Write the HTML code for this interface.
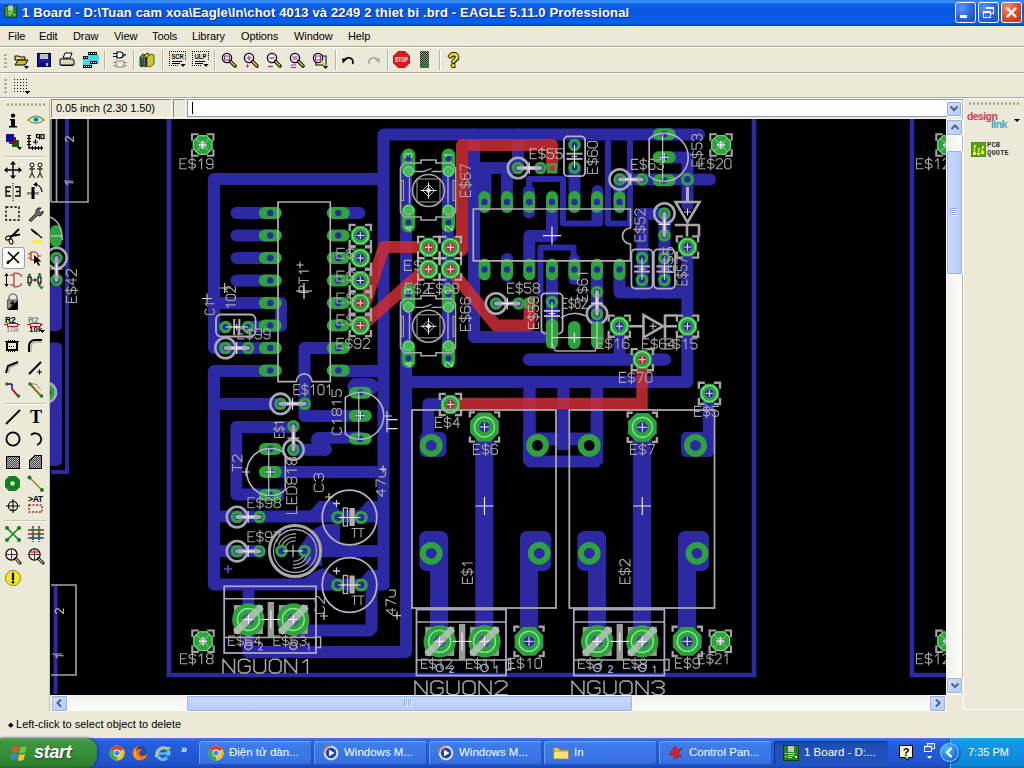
<!DOCTYPE html>
<html><head><meta charset="utf-8"><title>EAGLE</title><style>
html,body{margin:0;padding:0;overflow:hidden}
body{width:1024px;height:768px;overflow:hidden;position:relative;background:#ece9d8;font-family:"Liberation Sans",sans-serif;font-size:11px;color:#000}
div,span,svg{position:absolute}
#title{left:0;top:0;width:1024px;height:26px;background:linear-gradient(#2a78f0 0%,#3f95ff 7%,#0f62ea 16%,#0a57de 38%,#085ae6 70%,#0a60ee 86%,#0650d8 94%,#0340b4 100%)}
.appico{left:4px;top:5px}
.ttext{left:22px;top:5px;color:#fff;font-weight:bold;font-size:13px;white-space:nowrap;text-shadow:1px 1px 0 #0a2a80;letter-spacing:0.15px}
.wb{top:2px;width:19px;height:19px;border:1px solid #fff;border-radius:3px;background:radial-gradient(circle at 30% 25%,#5c94ff 0%,#2a62e0 55%,#1c48c0 100%)}
.wclose{background:radial-gradient(circle at 30% 25%,#f09070 0%,#d8482c 55%,#b83018 100%)}
#menu{left:0;top:26px;width:1024px;height:20px}
#menu span{top:4px;font-size:11px;white-space:nowrap;letter-spacing:-0.1px}
.hsep{left:0;width:1024px;height:1px;background:#aca899;border-bottom:1px solid #fff}
.vsep{width:1px;background:#b8b4a4;border-right:1px solid #fff}
.gripv{width:3px;background-image:radial-gradient(circle,#a09c8c 1px,transparent 1.3px);background-size:3px 4px}
.griph{height:3px;background-image:radial-gradient(circle,#a09c8c 1px,transparent 1.3px);background-size:4px 3px}
#canvas{left:50px;top:119px;width:896px;height:576px;background:#000;overflow:hidden}
#canvas svg{left:0;top:0}
.field{background:#ece9d8;border:1px solid;border-color:#8a887c #fff #fff #8a887c}
#task{left:0;top:738px;width:1024px;height:30px;background:linear-gradient(#3c80ea 0%,#2a68dc 8%,#245edc 20%,#2358d4 60%,#1f50c8 90%,#1a44b0 100%)}
#start{left:0;top:0;width:97px;height:30px;border-radius:0 12px 12px 0;background:linear-gradient(#58a858 0%,#3c963c 12%,#37903a 50%,#2e7e30 90%,#256c28 100%);box-shadow:1px 0 3px #1a3a90}
#start span{left:34px;top:4px;color:#fff;font-size:18px;font-weight:bold;font-style:italic;text-shadow:1px 1px 2px #1c4c1c;letter-spacing:-0.3px}
.tb{top:3px;height:24px;border-radius:3px;background:linear-gradient(#4c8cf4 0%,#3c7cea 15%,#3874e4 80%,#3068d8 100%);box-shadow:inset 1px 1px 0 #6aa0fa,inset -1px -1px 0 #2456c0;color:#fff;font-size:11.5px;white-space:nowrap;overflow:hidden}
.tb span{left:30px;top:5px}
.tb.act{background:linear-gradient(#1c48a8 0%,#2050b8 30%,#2254c0 100%);box-shadow:inset 1px 1px 1px #12308a}
#tray{left:949px;top:0;width:74px;height:30px;background:linear-gradient(#1cb0f4 0%,#1498e8 10%,#1290e0 50%,#0f84d4 90%,#0c70c0 100%);border-left:1px solid #0a58b0;box-shadow:inset 1px 0 0 #40c0ff}
#tray span{left:18px;top:8px;color:#fff;font-size:11px}
.sbtn{width:15px;height:15px;border:1px solid #fff;border-radius:2px;background:linear-gradient(135deg,#d4e0fc,#b4c8f8);box-shadow:0 0 0 1px #98b0e8 inset}
.sthumb{border:1px solid #fff;border-radius:2px;background:linear-gradient(90deg,#c8d8fc,#b8ccfa);box-shadow:0 0 0 1px #98b4f0 inset}
.strack{background:linear-gradient(90deg,#f0f0ec,#fdfdfb)}
</style></head><body>
<div id="title">
<svg class="appico" width="13" height="13" viewBox="0 0 16 16"><rect x="0" y="0" width="16" height="16" fill="#0c3c0c"/><rect x="1" y="1" width="14" height="14" fill="#1e8420"/><rect x="5" y="1" width="6" height="6" fill="#c4c4c4"/><rect x="6" y="0" width="1" height="1" fill="#c4c4c4"/><rect x="8" y="0" width="1" height="1" fill="#c4c4c4"/><rect x="10" y="0" width="1" height="1" fill="#c4c4c4"/><rect x="2" y="3" width="1" height="1" fill="#c8f070"/><rect x="2" y="5" width="1" height="1" fill="#c8f070"/><rect x="2" y="8" width="2" height="1" fill="#c8f070"/><rect x="5" y="8" width="7" height="1" fill="#c8f070"/><rect x="5" y="10" width="6" height="1" fill="#c8f070"/><rect x="2" y="11" width="2" height="1" fill="#c8f070"/><rect x="5" y="12" width="4" height="1" fill="#c8f070"/><rect x="12" y="11" width="2" height="2" fill="#e8e840"/></svg>
<span class="ttext">1 Board - D:\Tuan cam xoa\Eagle\In\chot 4013 và 2249 2 thiet bi .brd - EAGLE 5.11.0 Professional</span>
<div class="wb" style="left:955px"><div style="left:4px;top:12px;width:7px;height:3px;background:#fff"></div></div>
<div class="wb" style="left:978px"><svg width="19" height="19" viewBox="0 0 19 19" shape-rendering="crispEdges" style="left:0;top:0"><path d="M7.5 4.5h7v6h-2.5" fill="none" stroke="#fff"/><rect x="7" y="4" width="8" height="2" fill="#fff"/><rect x="4.5" y="8.5" width="7" height="6" fill="none" stroke="#fff"/><rect x="4" y="8" width="8" height="2" fill="#fff"/></svg></div>
<div class="wb wclose" style="left:1001px"><svg width="19" height="19" viewBox="0 0 19 19" style="left:0;top:0"><path d="M5.5 5.5L13.5 13.5M13.5 5.5L5.5 13.5" stroke="#fff" stroke-width="2.2" stroke-linecap="round"/></svg></div>
</div>
<div id="menu">
<span style="left:8px">File</span>
<span style="left:39px">Edit</span>
<span style="left:73px">Draw</span>
<span style="left:114px">View</span>
<span style="left:152px">Tools</span>
<span style="left:192px">Library</span>
<span style="left:241px">Options</span>
<span style="left:294px">Window</span>
<span style="left:348px">Help</span>
</div>
<div class="hsep" style="top:46px"></div>
<div class="hsep" style="top:72px"></div>
<div class="hsep" style="top:97px"></div>
<div class="gripv" style="left:4px;top:53px;height:16px"></div>
<div class="gripv" style="left:4px;top:78px;height:16px"></div>
<svg style="left:14px;top:52px" width="18" height="18" viewBox="0 0 18 18"><path d="M1 4h4l1 1h5v3H1z" fill="#e8e060" stroke="#000" stroke-width="1"/><path d="M1 13L4 8h10l-3 5z" fill="#c8c020" stroke="#000" stroke-width="1"/><path d="M10 14h5l-2.5 3z" fill="#000"/></svg><svg style="left:37px;top:53px" width="15" height="15" viewBox="0 0 15 15" shape-rendering="crispEdges"><rect x="0.5" y="0.5" width="13" height="13" fill="#1818a0" stroke="#000"/><rect x="3" y="1" width="8" height="5" fill="#c0c0c0"/><rect x="3" y="9" width="8" height="5" fill="#101070"/><rect x="9" y="10" width="2" height="3" fill="#c0c0c0"/></svg><svg style="left:59px;top:52px" width="17" height="16" viewBox="0 0 17 16"><path d="M4 6L6 1h7l-2 5z" fill="#fff" stroke="#000"/><path d="M1 7h13l1 2v4H1z" fill="#d8d8d8" stroke="#000"/><path d="M2 11h12" stroke="#e8e040" stroke-width="1.5"/><path d="M2 13.5h12" stroke="#000"/></svg><svg style="left:83px;top:52px" width="16" height="16" viewBox="0 0 16 16" shape-rendering="crispEdges"><rect x="5" y="0" width="9" height="3" fill="#000"/><rect x="0" y="4" width="5" height="3" fill="#000"/><rect x="5" y="3" width="11" height="9" fill="#40d8e8"/><rect x="0" y="7" width="9" height="6" fill="#40d8e8"/><rect x="7" y="9" width="7" height="3" fill="#000"/><rect x="0" y="13" width="9" height="3" fill="#000"/><rect x="6" y="1" width="1" height="1" fill="#fff"/><rect x="8" y="1" width="1" height="1" fill="#fff"/><rect x="10" y="1" width="1" height="1" fill="#fff"/><rect x="12" y="1" width="1" height="1" fill="#fff"/><rect x="1" y="14" width="1" height="1" fill="#fff"/><rect x="3" y="14" width="1" height="1" fill="#fff"/><rect x="5" y="14" width="1" height="1" fill="#fff"/><rect x="7" y="14" width="1" height="1" fill="#fff"/><rect x="1" y="5" width="1" height="1" fill="#fff"/><rect x="3" y="5" width="1" height="1" fill="#fff"/><rect x="8" y="10" width="1" height="1" fill="#fff"/><rect x="10" y="10" width="1" height="1" fill="#fff"/><rect x="12" y="10" width="1" height="1" fill="#fff"/></svg><svg style="left:112px;top:51px" width="16" height="18" viewBox="0 0 16 18"><path d="M1 2.5h4M1 5.5h4M5 1v6h3a3 3 0 0 0 0-6zM11 4h3" stroke="#000" stroke-width="1.1" fill="#fff"/><circle cx="12" cy="4" r="1" fill="#fff" stroke="#000" stroke-width="0.8"/><path d="M4 10h8v6H4zM1 11.5h3M1 14.5h3M12 11.5h3M12 14.5h3" stroke="#909088" stroke-width="1.1" fill="#e8e4d4"/></svg><svg style="left:139px;top:52px" width="16" height="16" viewBox="0 0 16 16"><path d="M1 5l3-3 2 1v10l-3 2-2-1z" fill="#60a030" stroke="#000" stroke-width="0.8"/><path d="M5 4l3-3 2 1v10l-3 3-2-1z" fill="#c8c030" stroke="#000" stroke-width="0.8"/><path d="M8 5l4-3 3 1v9l-4 3-3-1z" fill="#d0c828" stroke="#404000" stroke-width="0.8"/><path d="M7 5v9" stroke="#2020a0" stroke-width="2"/><path d="M3 6v8" stroke="#203060" stroke-width="1.5"/></svg><svg style="left:169px;top:51px" width="18" height="17" viewBox="0 0 18 17"><rect x="0" y="0" width="1" height="1" fill="#000"/><rect x="0" y="2" width="1" height="1" fill="#000"/><rect x="0" y="4" width="1" height="1" fill="#000"/><rect x="0" y="6" width="1" height="1" fill="#000"/><rect x="0" y="8" width="1" height="1" fill="#000"/><rect x="0" y="10" width="1" height="1" fill="#000"/><rect x="0" y="12" width="1" height="1" fill="#000"/><rect x="0" y="14" width="1" height="1" fill="#000"/><rect x="16" y="0" width="1" height="1" fill="#000"/><rect x="16" y="2" width="1" height="1" fill="#000"/><rect x="16" y="4" width="1" height="1" fill="#000"/><rect x="16" y="6" width="1" height="1" fill="#000"/><rect x="16" y="8" width="1" height="1" fill="#000"/><rect x="0" y="0" width="1" height="1" fill="#000"/><rect x="2" y="0" width="1" height="1" fill="#000"/><rect x="4" y="0" width="1" height="1" fill="#000"/><rect x="6" y="0" width="1" height="1" fill="#000"/><rect x="8" y="0" width="1" height="1" fill="#000"/><rect x="10" y="0" width="1" height="1" fill="#000"/><rect x="12" y="0" width="1" height="1" fill="#000"/><rect x="14" y="0" width="1" height="1" fill="#000"/><rect x="16" y="0" width="1" height="1" fill="#000"/><rect x="0" y="14" width="1" height="1" fill="#000"/><rect x="2" y="14" width="1" height="1" fill="#000"/><rect x="4" y="14" width="1" height="1" fill="#000"/><rect x="6" y="14" width="1" height="1" fill="#000"/><rect x="8" y="14" width="1" height="1" fill="#000"/><text x="8.5" y="8" font-size="7.5" font-weight="bold" text-anchor="middle" textLength="12" lengthAdjust="spacingAndGlyphs" font-family="Liberation Sans">SCR</text><rect x="3" y="10" width="10" height="1" fill="#000"/><rect x="3" y="12" width="8" height="1" fill="#000"/><path d="M11.5 13h5l-2.5 3z" fill="#000"/></svg><svg style="left:192px;top:51px" width="18" height="17" viewBox="0 0 18 17"><rect x="0" y="0" width="1" height="1" fill="#000"/><rect x="0" y="2" width="1" height="1" fill="#000"/><rect x="0" y="4" width="1" height="1" fill="#000"/><rect x="0" y="6" width="1" height="1" fill="#000"/><rect x="0" y="8" width="1" height="1" fill="#000"/><rect x="0" y="10" width="1" height="1" fill="#000"/><rect x="0" y="12" width="1" height="1" fill="#000"/><rect x="0" y="14" width="1" height="1" fill="#000"/><rect x="16" y="0" width="1" height="1" fill="#000"/><rect x="16" y="2" width="1" height="1" fill="#000"/><rect x="16" y="4" width="1" height="1" fill="#000"/><rect x="16" y="6" width="1" height="1" fill="#000"/><rect x="16" y="8" width="1" height="1" fill="#000"/><rect x="0" y="0" width="1" height="1" fill="#000"/><rect x="2" y="0" width="1" height="1" fill="#000"/><rect x="4" y="0" width="1" height="1" fill="#000"/><rect x="6" y="0" width="1" height="1" fill="#000"/><rect x="8" y="0" width="1" height="1" fill="#000"/><rect x="10" y="0" width="1" height="1" fill="#000"/><rect x="12" y="0" width="1" height="1" fill="#000"/><rect x="14" y="0" width="1" height="1" fill="#000"/><rect x="16" y="0" width="1" height="1" fill="#000"/><rect x="0" y="14" width="1" height="1" fill="#000"/><rect x="2" y="14" width="1" height="1" fill="#000"/><rect x="4" y="14" width="1" height="1" fill="#000"/><rect x="6" y="14" width="1" height="1" fill="#000"/><rect x="8" y="14" width="1" height="1" fill="#000"/><text x="8.5" y="8" font-size="7.5" font-weight="bold" text-anchor="middle" textLength="12" lengthAdjust="spacingAndGlyphs" font-family="Liberation Sans">ULP</text><rect x="3" y="10" width="10" height="1" fill="#000"/><rect x="3" y="12" width="8" height="1" fill="#000"/><path d="M11.5 13h5l-2.5 3z" fill="#000"/></svg><svg style="left:221px;top:52px" width="16" height="16" viewBox="0 0 16 16"><circle cx="6" cy="6" r="4.6" fill="#f8f0f8" stroke="#000" stroke-width="1.3"/><path d="M9.5 9.5 L14 14" stroke="#000" stroke-width="3.4" stroke-linecap="round"/><path d="M9.8 9.8 L13.8 13.8" stroke="#d8d840" stroke-width="1.6" stroke-linecap="round"/><rect x="3.5" y="4" width="5" height="4" fill="none" stroke="#a020a0" stroke-width="1"/></svg><svg style="left:243px;top:52px" width="16" height="17" viewBox="0 0 16 17"><circle cx="6" cy="6" r="4.6" fill="#f8f0f8" stroke="#000" stroke-width="1.3"/><path d="M9.5 9.5 L14 14" stroke="#000" stroke-width="3.4" stroke-linecap="round"/><path d="M9.8 9.8 L13.8 13.8" stroke="#d8d840" stroke-width="1.6" stroke-linecap="round"/><path d="M3.5 6h5M6 3.5v5" stroke="#a020a0" stroke-width="1.2"/><path d="M3 14h3M4.5 12.5v3" stroke="#c02060" stroke-width="1"/></svg><svg style="left:266px;top:52px" width="16" height="17" viewBox="0 0 16 17"><circle cx="6" cy="6" r="4.6" fill="#f8f0f8" stroke="#000" stroke-width="1.3"/><path d="M9.5 9.5 L14 14" stroke="#000" stroke-width="3.4" stroke-linecap="round"/><path d="M9.8 9.8 L13.8 13.8" stroke="#d8d840" stroke-width="1.6" stroke-linecap="round"/><path d="M3.5 6h5" stroke="#a020a0" stroke-width="1.2"/><path d="M2 14.5h5" stroke="#a020a0" stroke-width="1.3"/></svg><svg style="left:289px;top:52px" width="16" height="17" viewBox="0 0 16 17"><circle cx="6" cy="6" r="4.6" fill="#f8f0f8" stroke="#000" stroke-width="1.3"/><path d="M9.5 9.5 L14 14" stroke="#000" stroke-width="3.4" stroke-linecap="round"/><path d="M9.8 9.8 L13.8 13.8" stroke="#d8d840" stroke-width="1.6" stroke-linecap="round"/><path d="M3.5 5h5M3.5 7h5" stroke="#a020a0" stroke-width="1.1"/><path d="M2 13h5M2 15.5h5" stroke="#a020a0" stroke-width="1.2"/></svg><svg style="left:312px;top:52px" width="17" height="18" viewBox="0 0 17 18"><rect x="4" y="4" width="10" height="9" fill="#e8e8e8" stroke="#000"/><circle cx="6" cy="6" r="4.6" fill="#f8f0f8" stroke="#000" stroke-width="1.3"/><rect x="3.5" y="4" width="5" height="4" fill="none" stroke="#a020a0"/><path d="M9.8 9.8 L13 13" stroke="#d8d840" stroke-width="2" stroke-linecap="round"/><path d="M11 14h5l-2.5 3z" fill="#000"/></svg><svg style="left:342px;top:54px" width="16" height="12" viewBox="0 0 16 12"><path d="M3 6 A4.2 4.2 0 1 1 10.5 10" fill="none" stroke="#000" stroke-width="1.7"/><path d="M0 4.5L5.5 4.5 L0.8 9.5z" fill="#000"/></svg><svg style="left:366px;top:54px" width="16" height="12" viewBox="0 0 16 12"><path d="M11 6 A4.2 4.2 0 1 0 3.5 10" fill="none" stroke="#aaa69a" stroke-width="1.7"/><path d="M14 4.5L8.5 4.5 L13.2 9.5z" fill="#aaa69a"/></svg><svg style="left:393px;top:51px" width="17" height="17" viewBox="0 0 17 17"><polygon points="5,0.5 12,0.5 16.5,5 16.5,12 12,16.5 5,16.5 0.5,12 0.5,5" fill="#e01818" stroke="#a00000" stroke-width="0.8"/><text x="8.5" y="11.3" font-size="6.6" font-weight="bold" fill="#fff" text-anchor="middle" font-family="Liberation Sans" textLength="13" lengthAdjust="spacingAndGlyphs">STOP</text></svg><div style="left:420px;top:51px;width:9px;height:17px;background-image:conic-gradient(#202820 25%,#88a088 0 50%,#202820 0 75%,#88a088 0);background-size:2px 2px"></div><svg style="left:420px;top:63px" width="9" height="5" viewBox="0 0 9 5"><path d="M1 1l3 3 4-4" stroke="#208020" stroke-width="1.6" fill="none"/></svg><span style="left:447px;top:48px;font-size:21px;font-weight:bold;color:#f0e800;text-shadow:1px 0 0 #000,-1px 0 0 #000,0 1px 0 #000,0 -1px 0 #000,1px 1px 0 #000;transform:scaleX(0.9)">?</span><div class="vsep" style="left:104px;top:50px;height:20px"></div><div class="vsep" style="left:133px;top:50px;height:20px"></div><div class="vsep" style="left:162px;top:50px;height:20px"></div><div class="vsep" style="left:214px;top:50px;height:20px"></div><div class="vsep" style="left:335px;top:50px;height:20px"></div><div class="vsep" style="left:387px;top:50px;height:20px"></div><div class="vsep" style="left:439px;top:50px;height:20px"></div>
<svg style="left:14px;top:79px" width="17" height="16" viewBox="0 0 17 16" shape-rendering="crispEdges"><rect x="0" y="0" width="1" height="1" fill="#000"/><rect x="0" y="3" width="1" height="1" fill="#000"/><rect x="0" y="6" width="1" height="1" fill="#000"/><rect x="0" y="9" width="1" height="1" fill="#000"/><rect x="0" y="12" width="1" height="1" fill="#000"/><rect x="3" y="0" width="1" height="1" fill="#000"/><rect x="3" y="3" width="1" height="1" fill="#000"/><rect x="3" y="6" width="1" height="1" fill="#000"/><rect x="3" y="9" width="1" height="1" fill="#000"/><rect x="3" y="12" width="1" height="1" fill="#000"/><rect x="6" y="0" width="1" height="1" fill="#000"/><rect x="6" y="3" width="1" height="1" fill="#000"/><rect x="6" y="6" width="1" height="1" fill="#000"/><rect x="6" y="9" width="1" height="1" fill="#000"/><rect x="6" y="12" width="1" height="1" fill="#000"/><rect x="9" y="0" width="1" height="1" fill="#000"/><rect x="9" y="3" width="1" height="1" fill="#000"/><rect x="9" y="6" width="1" height="1" fill="#000"/><rect x="9" y="9" width="1" height="1" fill="#000"/><rect x="9" y="12" width="1" height="1" fill="#000"/><rect x="12" y="0" width="1" height="1" fill="#000"/><rect x="12" y="3" width="1" height="1" fill="#000"/><rect x="12" y="6" width="1" height="1" fill="#000"/><rect x="12" y="9" width="1" height="1" fill="#000"/><rect x="12" y="12" width="1" height="1" fill="#000"/><path d="M11 12h5l-2.5 3z" fill="#000"/></svg>
<div class="griph" style="left:6px;top:103px;width:40px"></div>
<div class="field" style="left:51px;top:99px;width:119px;height:17px"></div>
<span style="left:56px;top:102px;font-size:11px;white-space:nowrap;letter-spacing:-0.1px">0.05 inch (2.30 1.50)</span>
<div class="field" style="left:173px;top:99px;width:11px;height:17px"></div>
<div style="left:187px;top:99px;width:775px;height:18px;background:#fff;border-top:1px solid #7f9db9;border-left:1px solid #7f9db9;border-bottom:1px solid #7f9db9;box-sizing:border-box"></div>
<div style="left:192px;top:102px;width:1px;height:12px;background:#000"></div>
<div class="sbtn" style="left:946px;top:101px;width:14px;height:14px"></div>
<svg style="left:949px;top:105px" width="10" height="8" viewBox="0 0 10 8"><path d="M1.5 1.5L5 5 8.5 1.5" stroke="#4d6185" stroke-width="2" fill="none"/></svg>
<div style="left:49px;top:99px;width:1px;height:612px;background:#c8c4b4"></div>
<svg style="left:4px;top:112px" width="18" height="18" viewBox="0 0 18 18"><circle cx="9" cy="3.6" r="2.2" fill="#000"/><path d="M6 7h5v7h2v1.6H5V14h2V8.6H6z" fill="#000"/></svg><svg style="left:27px;top:112px" width="18" height="18" viewBox="0 0 18 18"><path d="M1 8 Q9 0.5 17 8 Q9 14.5 1 8z" fill="#fff" stroke="#a09020" stroke-width="1.3"/><circle cx="9" cy="7.6" r="3.4" fill="#40d8e8"/><circle cx="9" cy="7.6" r="1.4" fill="#103060"/></svg><svg style="left:4px;top:134px" width="18" height="18" viewBox="0 0 18 18"><rect x="8" y="6" width="7" height="7" fill="#106010"/><rect x="5" y="3" width="7" height="7" fill="#901010"/><rect x="2" y="0" width="8" height="8" fill="#1010a0"/><path d="M13 13h5l-2.5 3z" fill="#000"/></svg><svg style="left:27px;top:134px" width="18" height="18" viewBox="0 0 18 18"><path d="M2 1v13h14" stroke="#000" stroke-width="1.4" fill="none"/><rect x="0" y="1" width="4" height="1" fill="#000"/><rect x="0" y="4" width="4" height="1" fill="#000"/><rect x="0" y="7" width="4" height="1" fill="#000"/><rect x="0" y="10" width="4" height="1" fill="#000"/><rect x="5" y="12" width="1" height="4" fill="#000"/><rect x="8" y="12" width="1" height="4" fill="#000"/><rect x="11" y="12" width="1" height="4" fill="#000"/><rect x="14" y="12" width="1" height="4" fill="#000"/><path d="M6 8h5M8.5 5.5v5" stroke="#000" stroke-width="1.2"/><rect x="9.5" y="0.5" width="3" height="3" fill="none" stroke="#000" stroke-width="1.2"/><path d="M12.5 3.5v2" stroke="#000" stroke-width="1.2"/><rect x="14" y="0.5" width="3" height="4" fill="none" stroke="#000" stroke-width="1.2"/></svg><svg style="left:4px;top:161px" width="18" height="18" viewBox="0 0 18 18"><path d="M9 1v16M1 9h16" stroke="#000" stroke-width="1.4"/><path d="M9 0l-3 3.5h6zM9 18l-3-3.5h6zM0 9l3.5-3v6zM18 9l-3.5-3v6z" fill="#000"/></svg><svg style="left:27px;top:161px" width="18" height="18" viewBox="0 0 18 18"><circle cx="5" cy="4" r="2" fill="#fff" stroke="#000" stroke-width="1"/><path d="M5 6v6M2 8h6M5 12l-2.5 5M5 12l2.5 5" stroke="#000" stroke-width="1" fill="none"/><circle cx="13" cy="4" r="2" fill="#fff" stroke="#000" stroke-width="1"/><path d="M13 6v6M10 8h6M13 12l-2.5 5M13 12l2.5 5" stroke="#000" stroke-width="1" fill="none"/></svg><svg style="left:4px;top:183px" width="18" height="18" viewBox="0 0 18 18"><path d="M9 0v18" stroke="#000" stroke-width="1" stroke-dasharray="1.2 1.2"/><path d="M7 4H2v9h5M2 8.5h4M11 4h5v9h-5M12 8.5h4" stroke="#000" stroke-width="1.3" fill="none"/></svg><svg style="left:27px;top:182px" width="18" height="18" viewBox="0 0 18 18"><rect x="0" y="10" width="12" height="2.6" fill="#888880"/><rect x="4.5" y="5" width="3" height="12" fill="#000"/><path d="M8 2 Q14 3 15 10" stroke="#000" stroke-width="1.2" fill="none"/><path d="M6 2.5l4-2.5v5z" fill="#000"/></svg><svg style="left:4px;top:205px" width="18" height="18" viewBox="0 0 18 18"><rect x="2" y="2" width="13" height="13" fill="none" stroke="#000" stroke-width="1.4" stroke-dasharray="2.4 1.8"/></svg><svg style="left:27px;top:205px" width="18" height="18" viewBox="0 0 18 18"><path d="M2 15 L9 8 A4 4 0 0 1 14 3 L11.5 6 L13 8 L16 6 A4 4 0 0 1 10.5 10.5 L4 16.5z" fill="#707070" stroke="#000" stroke-width="0.8"/></svg><svg style="left:4px;top:227px" width="18" height="18" viewBox="0 0 18 18"><path d="M6 11L15 2M6.5 9L16 7.5" stroke="#000" stroke-width="1.8"/><ellipse cx="4" cy="11" rx="2.6" ry="1.8" fill="#fff" stroke="#000" stroke-width="1.1" transform="rotate(-30 4 11)"/><ellipse cx="7" cy="14.5" rx="1.8" ry="2.6" fill="#fff" stroke="#000" stroke-width="1.1" transform="rotate(-20 7 14.5)"/></svg><svg style="left:27px;top:227px" width="18" height="18" viewBox="0 0 18 18"><path d="M4 2L15 11" stroke="#000" stroke-width="1.2"/><path d="M5 3L10 7" stroke="#000" stroke-width="2"/><ellipse cx="10" cy="14.5" rx="5.5" ry="1.6" fill="#f0f020"/></svg><div style="left:2px;top:247px;width:21px;height:20px;border:1px solid #98a0b0;border-radius:3px;background:#fcfcfc"></div><svg style="left:4px;top:250px" width="18" height="18" viewBox="0 0 18 18"><path d="M4 2L15 13M15 2L5 12" stroke="#000" stroke-width="1.7"/><path d="M4.5 11.5L3.8 13" stroke="#000" stroke-width="2.4" stroke-linecap="round"/></svg><svg style="left:27px;top:250px" width="18" height="18" viewBox="0 0 18 18"><path d="M1 4h3M1 8h3M4 2h3a4 4 0 0 1 0 8H4zM11 6h3" stroke="#b02020" stroke-width="1.1" fill="none"/><path d="M7 5v9l2.5-2 2 4 1.5-1-2-3.5h3.5z" fill="#000"/></svg><svg style="left:4px;top:272px" width="18" height="18" viewBox="0 0 18 18"><path d="M2.5 3v10" stroke="#000" stroke-width="1"/><path d="M2.5 1l-2.2 3h4.4zM2.5 15l-2.2-3h4.4z" fill="#000"/><path d="M6 3h4M6 13h4M10 1v14M10 1h2a7 7 0 0 1 0 14h-2" stroke="#b02020" stroke-width="1.1" fill="none"/></svg><svg style="left:27px;top:272px" width="18" height="18" viewBox="0 0 18 18"><rect x="1" y="5" width="3" height="6" fill="none" stroke="#000" stroke-width="1.2"/><circle cx="2.5" cy="3" r="1.4" fill="#108020"/><circle cx="2.5" cy="13" r="1.4" fill="#108020"/><path d="M5 8h4M7.5 6.5L9.5 8 7.5 9.5" stroke="#000" stroke-width="1" fill="none"/><rect x="11" y="5" width="3" height="6" fill="none" stroke="#000" stroke-width="1.2"/><circle cx="12.5" cy="2.5" r="1.6" fill="#108020"/><circle cx="12.5" cy="13" r="1.6" fill="#108020"/><path d="M12 14.5h5l-2.5 3z" fill="#108020"/></svg><svg style="left:4px;top:293px" width="18" height="18" viewBox="0 0 18 18"><path d="M5 8V5a4 4 0 0 1 8 0v3" stroke="#808080" stroke-width="1.6" fill="none"/><rect x="3.5" y="7" width="10" height="9" fill="#909090" stroke="#404040" stroke-width="0.8"/><path d="M13.5 8v8.5H4" stroke="#000" stroke-width="1"/><path d="M8.5 9v5M6.5 11l2-2.2 2 2.2" stroke="#000" stroke-width="1.3" fill="none"/></svg><span style="left:5px;top:315px;font-size:8.5px;font-weight:bold;color:#000;letter-spacing:-0.2px">R2</span><svg style="left:4px;top:322px" width="16" height="6" viewBox="0 0 16 6" shape-rendering="crispEdges"><path d="M0 2.5h3M13 2.5h3" stroke="#b02020" stroke-width="1"/><rect x="3" y="1" width="10" height="3" fill="none" stroke="#b02020" stroke-width="1"/></svg><span style="left:6px;top:325px;font-size:8px;color:#808080;font-weight:normal">10k</span><span style="left:28px;top:315px;font-size:8.5px;font-weight:bold;color:#808080;letter-spacing:-0.2px">R2</span><svg style="left:27px;top:322px" width="16" height="6" viewBox="0 0 16 6" shape-rendering="crispEdges"><path d="M0 2.5h3M13 2.5h3" stroke="#b02020" stroke-width="1"/><rect x="3" y="1" width="10" height="3" fill="none" stroke="#b02020" stroke-width="1"/></svg><span style="left:29px;top:325px;font-size:8px;color:#000;font-weight:bold">10k</span><svg style="left:40px;top:330px" width="5" height="4" viewBox="0 0 5 4"><path d="M0 0h5l-2.5 3z" fill="#000"/></svg><svg style="left:4px;top:338px" width="18" height="16" viewBox="0 0 18 16" shape-rendering="crispEdges"><rect x="3" y="4" width="10" height="8" fill="none" stroke="#000" stroke-width="1.2"/><rect x="4" y="2" width="1" height="2" fill="#000"/><rect x="6" y="2" width="1" height="2" fill="#000"/><rect x="8" y="2" width="1" height="2" fill="#000"/><rect x="10" y="2" width="1" height="2" fill="#000"/><rect x="4" y="12" width="1" height="2" fill="#000"/><rect x="6" y="12" width="1" height="2" fill="#000"/><rect x="8" y="12" width="1" height="2" fill="#000"/><rect x="10" y="12" width="1" height="2" fill="#000"/><rect x="1" y="3" width="14" height="1" fill="#000"/><path d="M5 8h6" stroke="#000" stroke-dasharray="1 1"/></svg><svg style="left:27px;top:338px" width="18" height="18" viewBox="0 0 18 18"><path d="M2 14V8a6 6 0 0 1 6-6h7" stroke="#000" stroke-width="2" fill="none"/><path d="M4 14V9a5 5 0 0 1 5-5h6" stroke="#909090" stroke-width="1" fill="none"/></svg><svg style="left:4px;top:360px" width="18" height="18" viewBox="0 0 18 18"><path d="M2 13L4 6L14 2" stroke="#000" stroke-width="2" fill="none"/><path d="M4 13L6 7.5L14 4" stroke="#909090" stroke-width="1" fill="none"/></svg><svg style="left:27px;top:360px" width="18" height="18" viewBox="0 0 18 18"><path d="M2 14L14 2" stroke="#000" stroke-width="2"/><path d="M10 12h5M12.5 9.5v5" stroke="#000" stroke-width="1"/></svg><svg style="left:4px;top:381px" width="18" height="18" viewBox="0 0 18 18"><path d="M3 3h5" stroke="#b02020" stroke-width="2"/><path d="M8 3v5l6 7" stroke="#1818c0" stroke-width="1.6" fill="none"/><path d="M8 8l6 7" stroke="#b02020" stroke-width="1.6"/><circle cx="3" cy="3" r="1.8" fill="#108020"/><circle cx="14.5" cy="15" r="1.8" fill="#108020"/></svg><svg style="left:27px;top:381px" width="18" height="18" viewBox="0 0 18 18"><path d="M3 3l11 12" stroke="#a08020" stroke-width="2"/><path d="M3 3l11 12" stroke="#000" stroke-width="0.8" stroke-dasharray="1.5 1.5"/><path d="M5 3l4 0 5 6" stroke="#000" stroke-width="0.8" fill="none" stroke-dasharray="1 1"/><circle cx="3" cy="3" r="1.8" fill="#108020"/><circle cx="14.5" cy="15" r="1.8" fill="#108020"/></svg><svg style="left:4px;top:408px" width="18" height="18" viewBox="0 0 18 18"><path d="M2 16L16 2" stroke="#000" stroke-width="1.8"/></svg><span style="left:30px;top:407px;font-size:18px;font-family:'Liberation Serif',serif;font-weight:bold;line-height:20px">T</span><svg style="left:4px;top:430px" width="18" height="18" viewBox="0 0 18 18"><circle cx="9" cy="9" r="6.6" fill="none" stroke="#000" stroke-width="1.8"/></svg><svg style="left:27px;top:430px" width="18" height="18" viewBox="0 0 18 18"><path d="M4 5a6 6 0 1 1 6 10" fill="none" stroke="#000" stroke-width="1.8"/></svg><div style="left:6px;top:456px;width:12px;height:11px;border:1px solid #000;background-image:conic-gradient(#404040 25%,#c0c0c0 0 50%,#404040 0 75%,#c0c0c0 0);background-size:2px 2px"></div><svg style="left:29px;top:455px" width="14" height="14" viewBox="0 0 14 14" shape-rendering="crispEdges"><defs><pattern id="chk" width="2" height="2" patternUnits="userSpaceOnUse"><rect width="2" height="2" fill="#c0c0c0"/><rect width="1" height="1" fill="#404040"/><rect x="1" y="1" width="1" height="1" fill="#404040"/></pattern></defs><path d="M0.5 13.5V6L6 0.5H12.5V13.5z" fill="url(#chk)" stroke="#000"/></svg><svg style="left:4px;top:475px" width="18" height="18" viewBox="0 0 18 18"><polygon points="5,1 12,1 16,5 16,12 12,16 5,16 1,12 1,5" fill="#108020"/><circle cx="8.5" cy="8.5" r="2.2" fill="#d0f0d0"/></svg><svg style="left:27px;top:475px" width="18" height="18" viewBox="0 0 18 18"><path d="M2 2L15 15" stroke="#a08020" stroke-width="1.5"/><circle cx="2.5" cy="2.5" r="2" fill="#108020"/><circle cx="15" cy="15" r="2" fill="#108020"/></svg><svg style="left:4px;top:497px" width="18" height="18" viewBox="0 0 18 18"><circle cx="9" cy="9" r="4.6" fill="none" stroke="#000" stroke-width="1.1"/><path d="M9 2v14M2 9h14" stroke="#000" stroke-width="1"/></svg><span style="left:28px;top:494px;font-size:8.5px;font-weight:bold;letter-spacing:-0.3px">&gt;AT</span><svg style="left:28px;top:504px" width="16" height="10" viewBox="0 0 16 10"><rect x="1" y="1" width="13" height="7" fill="none" stroke="#b02020" stroke-width="1.4" stroke-dasharray="2 1.5"/></svg><svg style="left:4px;top:525px" width="18" height="18" viewBox="0 0 18 18"><path d="M3 3l12 12M15 3L3 15" stroke="#108020" stroke-width="1.5"/><circle cx="3" cy="3" r="2" fill="#108020"/><circle cx="15" cy="3" r="2" fill="#108020"/><circle cx="3" cy="15" r="2" fill="#108020"/><circle cx="15" cy="15" r="2" fill="#108020"/></svg><svg style="left:27px;top:525px" width="18" height="18" viewBox="0 0 18 18"><path d="M1 5h16M1 9h16" stroke="#b02020" stroke-width="1.3"/><path d="M1 13h16" stroke="#1818c0" stroke-width="1.3"/><path d="M6 1v16M12 1v16" stroke="#1818c0" stroke-width="1.3" stroke-dasharray="2 1"/><circle cx="6" cy="5" r="1.8" fill="#108020"/><circle cx="12" cy="5" r="1.8" fill="#108020"/><circle cx="6" cy="13" r="1.8" fill="#108020"/><circle cx="12" cy="13" r="1.8" fill="#108020"/><circle cx="12" cy="9" r="1.8" fill="#108020"/></svg><svg style="left:4px;top:547px" width="18" height="18" viewBox="0 0 18 18"><circle cx="7.5" cy="7.5" r="5.6" fill="#f8f4f0" stroke="#000" stroke-width="1.2"/><path d="M1 7.5h13M7.5 3v9" stroke="#802020" stroke-width="1"/><path d="M11.5 11.5L16 16" stroke="#000" stroke-width="3" stroke-linecap="round"/><path d="M12 12L15.8 15.8" stroke="#d8d8a0" stroke-width="1.2" stroke-linecap="round"/></svg><svg style="left:27px;top:547px" width="18" height="18" viewBox="0 0 18 18"><circle cx="7.5" cy="7.5" r="5.6" fill="#f8f4f0" stroke="#000" stroke-width="1.2"/><path d="M1 7.5h13M7.5 3v9" stroke="#802020" stroke-width="1"/><path d="M2 5h11" stroke="#a02020" stroke-width="1.2"/><path d="M11.5 11.5L16 16" stroke="#000" stroke-width="3" stroke-linecap="round"/><path d="M12 12L15.8 15.8" stroke="#d8d8a0" stroke-width="1.2" stroke-linecap="round"/></svg><svg style="left:4px;top:569px" width="18" height="18" viewBox="0 0 18 18"><circle cx="9" cy="9" r="7.6" fill="#f0e820" stroke="#807000" stroke-width="0.8"/><path d="M9 4.5v6" stroke="#000" stroke-width="2.2" stroke-linecap="round"/><circle cx="9" cy="13.3" r="1.3" fill="#000"/></svg><div style="left:4px;top:156px;width:42px;height:1px;background:#c8c4b4;border-bottom:1px solid #fff"></div><div style="left:4px;top:403px;width:42px;height:1px;background:#c8c4b4;border-bottom:1px solid #fff"></div><div style="left:4px;top:520px;width:42px;height:1px;background:#c8c4b4;border-bottom:1px solid #fff"></div>
<div style="left:963px;top:99px;width:61px;height:611px;background:#ece9d8;border-left:1px solid #fff;border-bottom:1px solid #fff;box-sizing:border-box"></div>
<div style="left:962px;top:99px;width:1px;height:612px;background:#b8b4a4"></div>
<div class="griph" style="left:968px;top:102px;width:52px"></div>
<span style="left:967px;top:110px;font-size:10.5px;font-weight:bold;color:#d83858;letter-spacing:-0.6px">design</span>
<span style="left:991px;top:118px;font-size:10.5px;font-weight:bold;color:#38a8c8;letter-spacing:-0.6px">link</span>
<svg style="left:1014px;top:119px" width="6" height="4" viewBox="0 0 6 4"><path d="M0 0h6l-3 3z" fill="#000"/></svg>
<svg style="left:971px;top:142px" width="15" height="15" viewBox="0 0 15 15" shape-rendering="crispEdges"><rect width="15" height="15" fill="#4a8c1c"/><rect x="1" y="1" width="13" height="13" fill="#5aa020"/><rect x="3" y="3" width="2" height="2" fill="#e8f040"/><rect x="3" y="5" width="1" height="6" fill="#e8f040"/><rect x="2" y="10" width="3" height="3" fill="#e8f040"/><rect x="7" y="6" width="2" height="2" fill="#e8f040"/><rect x="7" y="8" width="1" height="4" fill="#e8f040"/><rect x="6" y="11" width="3" height="2" fill="#e8f040"/><rect x="11" y="4" width="2" height="2" fill="#e8f040"/><rect x="11" y="6" width="1" height="4" fill="#e8f040"/><rect x="10" y="9" width="3" height="3" fill="#e8f040"/></svg>
<span style="left:987px;top:141px;font-size:7px;font-weight:bold;line-height:8px;color:#303030;letter-spacing:0.2px;font-family:'Liberation Mono',monospace">PCB<br>QUOTE</span>
<div class="strack" style="left:946px;top:119px;width:16px;height:576px"></div>
<div class="sbtn" style="left:946px;top:119px"></div>
<svg style="left:950px;top:123px" width="10" height="8" viewBox="0 0 10 8"><path d="M1.5 6L5 2.5 8.5 6" stroke="#4d6185" stroke-width="2" fill="none"/></svg>
<div class="sbtn" style="left:946px;top:677px"></div>
<svg style="left:950px;top:682px" width="10" height="8" viewBox="0 0 10 8"><path d="M1.5 1.5L5 5 8.5 1.5" stroke="#4d6185" stroke-width="2" fill="none"/></svg>
<div class="sthumb" style="left:946px;top:150px;width:15px;height:123px"></div>
<svg style="left:950px;top:208px" width="8" height="8" viewBox="0 0 8 8" shape-rendering="crispEdges"><rect x="0" y="0" width="7" height="1" fill="#8fa8e0"/><rect x="0" y="2" width="7" height="1" fill="#8fa8e0"/><rect x="0" y="4" width="7" height="1" fill="#8fa8e0"/><rect x="0" y="6" width="7" height="1" fill="#8fa8e0"/><rect x="1" y="1" width="7" height="1" fill="#f0f4ff"/><rect x="1" y="3" width="7" height="1" fill="#f0f4ff"/><rect x="1" y="5" width="7" height="1" fill="#f0f4ff"/><rect x="1" y="7" width="7" height="1" fill="#f0f4ff"/></svg>
<div class="strack" style="left:51px;top:695px;width:895px;height:16px;background:linear-gradient(#f0f0ec,#fdfdfb)"></div>
<div class="sbtn" style="left:51px;top:695px"></div>
<svg style="left:55px;top:698px" width="8" height="10" viewBox="0 0 8 10"><path d="M6 1.5L2.5 5 6 8.5" stroke="#4d6185" stroke-width="2" fill="none"/></svg>
<div class="sbtn" style="left:929px;top:695px"></div>
<svg style="left:934px;top:698px" width="8" height="10" viewBox="0 0 8 10"><path d="M2 1.5L5.5 5 2 8.5" stroke="#4d6185" stroke-width="2" fill="none"/></svg>
<div class="sthumb" style="left:186px;top:695px;width:445px;height:15px;background:linear-gradient(#c8d8fc,#b8ccfa)"></div>
<svg style="left:404px;top:699px" width="8" height="8" viewBox="0 0 8 8" shape-rendering="crispEdges"><rect x="0" y="0" width="1" height="7" fill="#8fa8e0"/><rect x="2" y="0" width="1" height="7" fill="#8fa8e0"/><rect x="4" y="0" width="1" height="7" fill="#8fa8e0"/><rect x="6" y="0" width="1" height="7" fill="#8fa8e0"/><rect x="1" y="1" width="1" height="7" fill="#f0f4ff"/><rect x="3" y="1" width="1" height="7" fill="#f0f4ff"/><rect x="5" y="1" width="1" height="7" fill="#f0f4ff"/><rect x="7" y="1" width="1" height="7" fill="#f0f4ff"/></svg>
<div style="left:946px;top:695px;width:17px;height:16px;background:#ece9d8"></div>
<span style="left:8px;top:718px;font-size:11px;white-space:nowrap"><span style="position:static;font-size:7px;vertical-align:1px">&#9670;</span> Left-click to select object to delete</span>
<div id="task"><div id="start">
<svg style="left:11px;top:5px" width="18" height="20" viewBox="0 0 18 20"><path d="M2 4 Q5 2 8 3.5 L6.8 9.5 Q4 8 0.8 10z" fill="#e8502c"/><path d="M9.5 3.8 Q12.5 5 15.5 3 L14.2 9 Q11 11 8.2 9.8z" fill="#78c83c"/><path d="M0.5 11.5 Q3.8 9.5 6.5 11 L5.3 17 Q2.5 15.5 -0.5 17.5z" fill="#4080e0"/><path d="M8 11.3 Q11 12.5 14 10.5 L12.8 16.5 Q9.5 18.5 6.8 17.2z" fill="#f0c828"/></svg>
<span>start</span></div>
<svg style="left:109px;top:7px" width="16" height="16" viewBox="0 0 16 16"><circle cx="8" cy="8" r="7.5" fill="#e8e8e8"/><path d="M8 8L1.5 4.2A7.5 7.5 0 0 1 14.5 4.2z" fill="#e04030"/><path d="M8 8L14.5 4.2A7.5 7.5 0 0 1 8 15.5z" fill="#f0c020"/><path d="M8 8L8 15.5A7.5 7.5 0 0 1 1.5 4.2z" fill="#40a848"/><circle cx="8" cy="8" r="3.4" fill="#fff"/><circle cx="8" cy="8" r="2.6" fill="#4080e8"/></svg>
<svg style="left:132px;top:7px" width="16" height="16" viewBox="0 0 16 16"><circle cx="8" cy="8" r="7.5" fill="#3048a0"/><path d="M8 0.5A7.5 7.5 0 1 0 15.5 8C14 11 10 12 8 10 6 8 8 5 10 5 8 3 5 4 4 6 4 3 6 1 8 0.5z" fill="#f07818"/><path d="M3 4Q1 8 3 12 5 15 9 15 4 13 4 8z" fill="#f0b020"/></svg>
<svg style="left:155px;top:7px" width="16" height="16" viewBox="0 0 16 16"><circle cx="8" cy="8.5" r="6" fill="none" stroke="#60b8f0" stroke-width="3.2"/><path d="M3 8.5h10" stroke="#60b8f0" stroke-width="2.4"/><path d="M12 10.5h4v3h-4z" fill="#245edc"/><path d="M0.5 12Q3 1 15.5 3" stroke="#f0d040" stroke-width="1.5" fill="none"/></svg>
<span style="left:181px;top:5px;color:#fff;font-size:11px;letter-spacing:-1px;font-weight:bold">»</span>
<div class="tb" style="left:199px;width:113px"><svg style="left:9px;top:4px" width="16" height="16" viewBox="0 0 16 16"><circle cx="8" cy="8" r="7.5" fill="#e8e8e8"/><path d="M8 8L1.5 4.2A7.5 7.5 0 0 1 14.5 4.2z" fill="#e04030"/><path d="M8 8L14.5 4.2A7.5 7.5 0 0 1 8 15.5z" fill="#f0c020"/><path d="M8 8L8 15.5A7.5 7.5 0 0 1 1.5 4.2z" fill="#40a848"/><circle cx="8" cy="8" r="3.4" fill="#fff"/><circle cx="8" cy="8" r="2.6" fill="#4080e8"/></svg><span>Điện tử dàn...</span></div>
<div class="tb" style="left:314px;width:113px"><svg style="left:9px;top:4px" width="16" height="16" viewBox="0 0 16 16"><circle cx="8" cy="8" r="7.5" fill="#f0f0f8" stroke="#6878a8" stroke-width="0.8"/><circle cx="8" cy="8" r="5.4" fill="#1848c0"/><path d="M6 4.8L11.5 8 6 11.2z" fill="#fff"/><path d="M1 8A7 7 0 0 1 8 1" stroke="#f08020" stroke-width="1.6" fill="none"/></svg><span>Windows M...</span></div>
<div class="tb" style="left:429px;width:113px"><svg style="left:9px;top:4px" width="16" height="16" viewBox="0 0 16 16"><circle cx="8" cy="8" r="7.5" fill="#f0f0f8" stroke="#6878a8" stroke-width="0.8"/><circle cx="8" cy="8" r="5.4" fill="#1848c0"/><path d="M6 4.8L11.5 8 6 11.2z" fill="#fff"/><path d="M1 8A7 7 0 0 1 8 1" stroke="#f08020" stroke-width="1.6" fill="none"/></svg><span>Windows M...</span></div>
<div class="tb" style="left:544px;width:113px"><svg style="left:9px;top:4px" width="16" height="16" viewBox="0 0 16 16"><path d="M0.5 3h5l1.5 2h8.5v9H0.5z" fill="#f0d060" stroke="#a08020" stroke-width="0.8"/><path d="M0.5 6h15v8H0.5z" fill="#f8e080" stroke="#a08020" stroke-width="0.8"/></svg><span>In</span></div>
<div class="tb" style="left:659px;width:113px"><svg style="left:9px;top:4px" width="16" height="16" viewBox="0 0 16 16"><path d="M1 10L7 1l2 4 5-2-4 6 4 2-8 3 1-4z" fill="#e02028" stroke="#901018" stroke-width="0.6"/></svg><span>Control Pan...</span></div>
<div class="tb act" style="left:774px;width:114px"><svg style="left:9px;top:4px" width="16" height="16" viewBox="0 0 16 16"><rect width="16" height="16" fill="#0c3c0c"/><rect x="1" y="1" width="14" height="14" fill="#1e8420"/><rect x="5" y="1" width="6" height="6" fill="#c4c4c4"/><rect x="2" y="8" width="2" height="1" fill="#c8f070"/><rect x="5" y="8" width="7" height="1" fill="#c8f070"/><rect x="5" y="10" width="6" height="1" fill="#c8f070"/><rect x="2" y="11" width="2" height="1" fill="#c8f070"/><rect x="5" y="12" width="4" height="1" fill="#c8f070"/><rect x="12" y="11" width="2" height="2" fill="#e8e840"/></svg><span>1 Board - D:...</span></div>
<svg style="left:899px;top:7px" width="15" height="17" viewBox="0 0 15 17"><path d="M0.5 0.5h13v12h-4l-1 3-2-3h-6z" fill="#f8f8d0" stroke="#000" stroke-width="1"/><text x="7" y="11" font-size="11" font-weight="bold" text-anchor="middle" font-family="Liberation Sans">?</text></svg>
<svg style="left:923px;top:5px" width="13" height="17" viewBox="0 0 13 17"><rect x="4.5" y="0.5" width="7" height="5" fill="none" stroke="#fff"/><rect x="1.5" y="3.5" width="7" height="5" fill="#245edc" stroke="#fff"/><path d="M1 3.5h8M4 0.5h8" stroke="#fff" stroke-width="1.6"/><path d="M4 13h5l-2.5 3z" fill="#fff"/></svg>
<div id="tray"><span>7:35 PM</span></div>
<div style="left:940px;top:5px;width:19px;height:19px;border-radius:10px;background:radial-gradient(circle at 35% 30%,#58b8ff,#1478e0 60%,#0c58c0);box-shadow:0 0 0 1px #8cc8ff inset,1px 1px 2px #0a3a90"></div>
<svg style="left:944px;top:9px" width="10" height="11" viewBox="0 0 10 11"><path d="M7 1.5L3 5.5 7 9.5" stroke="#fff" stroke-width="2.4" fill="none" stroke-linecap="round" stroke-linejoin="round"/></svg>
</div>
<div id="canvas"><svg width="896" height="576" viewBox="50 119 896 576" font-family="Liberation Sans, sans-serif">
<path d="M67 119 L67 472 L51 472" stroke="#2d29a2" stroke-width="4" fill="none" stroke-linecap="butt" stroke-linejoin="miter"/>
<rect x="45" y="285" width="17" height="46" rx="5" fill="#2d29a2"/>
<rect x="45" y="342.5" width="17" height="123.5" rx="5" fill="#2d29a2"/>
<path d="M55.5 585 L55.5 694" stroke="#2d29a2" stroke-width="4" fill="none" stroke-linecap="butt" stroke-linejoin="round"/>
<path d="M169 119 L169 675 L754 675 L754 119" stroke="#2d29a2" stroke-width="4.6" fill="none" stroke-linecap="butt" stroke-linejoin="miter"/>
<path d="M912 119 L912 675 L946 675" stroke="#2d29a2" stroke-width="4.6" fill="none" stroke-linecap="butt" stroke-linejoin="miter"/>
<path d="M699 134.5 L383.5 134.5 L383.5 584.5" stroke="#2d29a2" stroke-width="12" fill="none" stroke-linecap="round" stroke-linejoin="round"/>
<path d="M383.5 179 L214 179 L214 348 L270 348" stroke="#2d29a2" stroke-width="12" fill="none" stroke-linecap="round" stroke-linejoin="round"/>
<path d="M236.5 213 L270 213" stroke="#2d29a2" stroke-width="12" fill="none" stroke-linecap="round" stroke-linejoin="round"/>
<path d="M236.5 235.5 L270 235.5" stroke="#2d29a2" stroke-width="12" fill="none" stroke-linecap="round" stroke-linejoin="round"/>
<path d="M236.5 258 L270 258" stroke="#2d29a2" stroke-width="12" fill="none" stroke-linecap="round" stroke-linejoin="round"/>
<path d="M236.5 280.5 L270 280.5" stroke="#2d29a2" stroke-width="12" fill="none" stroke-linecap="round" stroke-linejoin="round"/>
<path d="M214 303 L281 303 L281 326 L248 327" stroke="#2d29a2" stroke-width="12" fill="none" stroke-linecap="round" stroke-linejoin="round"/>
<path d="M270 371 L214 371 L214 584.5 L383.5 584.5" stroke="#2d29a2" stroke-width="12" fill="none" stroke-linecap="round" stroke-linejoin="round"/>
<path d="M214 404 L281 404" stroke="#2d29a2" stroke-width="12" fill="none" stroke-linecap="round" stroke-linejoin="round"/>
<path d="M293 427 L236.3 427 L236.3 494.5 L270 494.5" stroke="#2d29a2" stroke-width="12" fill="none" stroke-linecap="round" stroke-linejoin="round"/>
<path d="M270 494.5 L284 494.5" stroke="#2d29a2" stroke-width="12" fill="none" stroke-linecap="butt" stroke-linejoin="round"/>
<path d="M270 472 L383.5 472" stroke="#2d29a2" stroke-width="12" fill="none" stroke-linecap="round" stroke-linejoin="round"/>
<path d="M214 516.5 L383.5 516.5" stroke="#2d29a2" stroke-width="12" fill="none" stroke-linecap="round" stroke-linejoin="round"/>
<path d="M214 551 L259 551" stroke="#2d29a2" stroke-width="12" fill="none" stroke-linecap="round" stroke-linejoin="round"/>
<path d="M304 551 L383.5 551" stroke="#2d29a2" stroke-width="12" fill="none" stroke-linecap="round" stroke-linejoin="round"/>
<path d="M299 551 L307 536 L322 535 L322 566 L307 565 Z" fill="#2d29a2"/>
<path d="M310 511 L319 501 L334 501 L340 511Z M358 511 L367 501 L378 501 L378 511Z" fill="#2d29a2"/>
<path d="M300 546 L312 530 L324 524 L340 524 L340 546Z" fill="#2d29a2"/>
<path d="M304 579 L312 573 L323 568 L338 579Z M361 579 L368 570 L378 570 L378 579Z" fill="#2d29a2"/>
<path d="M338 213 L359.5 213" stroke="#2d29a2" stroke-width="12" fill="none" stroke-linecap="round" stroke-linejoin="round"/>
<path d="M338 348 L304.5 348 L304.5 416 L360 416" stroke="#2d29a2" stroke-width="12" fill="none" stroke-linecap="round" stroke-linejoin="round"/>
<path d="M338 371 L383.5 371" stroke="#2d29a2" stroke-width="12" fill="none" stroke-linecap="round" stroke-linejoin="round"/>
<path d="M356 386.5 L370 386.5" stroke="#2d29a2" stroke-width="17" fill="none" stroke-linecap="round" stroke-linejoin="round"/>
<path d="M293.4 449.7 L325 449.7" stroke="#2d29a2" stroke-width="12" fill="none" stroke-linecap="round" stroke-linejoin="round"/>
<path d="M318 438 L360 437.5" stroke="#2d29a2" stroke-width="12" fill="none" stroke-linecap="round" stroke-linejoin="round"/>
<path d="M318 440 L325 449" stroke="#2d29a2" stroke-width="14" fill="none" stroke-linecap="round" stroke-linejoin="round"/>
<path d="M371.5 586 L371.5 630.5 L293 630.5" stroke="#2d29a2" stroke-width="12" fill="none" stroke-linecap="round" stroke-linejoin="bevel"/>
<path d="M406 157 L406 652 L248.4 652 L248.4 619.5" stroke="#2d29a2" stroke-width="12" fill="none" stroke-linecap="round" stroke-linejoin="round"/>
<path d="M248.5 584.5 L248.5 619.5" stroke="#2d29a2" stroke-width="12" fill="none" stroke-linecap="round" stroke-linejoin="round"/>
<path d="M448 157 L448 360" stroke="#2d29a2" stroke-width="12" fill="none" stroke-linecap="round" stroke-linejoin="round"/>
<path d="M406 382 L687.3 382 L687.3 247" stroke="#2d29a2" stroke-width="12" fill="none" stroke-linecap="round" stroke-linejoin="round"/>
<path d="M529.5 382 L529.5 450" stroke="#2d29a2" stroke-width="12.5" fill="none" stroke-linecap="butt" stroke-linejoin="round"/>
<path d="M563.5 382 L563.5 450" stroke="#2d29a2" stroke-width="12.5" fill="none" stroke-linecap="butt" stroke-linejoin="round"/>
<path d="M597 382 L597 450" stroke="#2d29a2" stroke-width="12.5" fill="none" stroke-linecap="butt" stroke-linejoin="round"/>
<path d="M523 432.5 H603 V462 L598 467.5 H528 L523 462Z M543 445.5 H584 V455.5 H543Z" fill="#2d29a2" fill-rule="evenodd"/>
<path d="M474 134.5 L474 337 L552 337" stroke="#2d29a2" stroke-width="12" fill="none" stroke-linecap="round" stroke-linejoin="round"/>
<path d="M474 168 L518 168 L518 134.5" stroke="#2d29a2" stroke-width="12" fill="none" stroke-linecap="round" stroke-linejoin="round"/>
<path d="M507 168 L507 202" stroke="#2d29a2" stroke-width="12" fill="none" stroke-linecap="round" stroke-linejoin="round"/>
<path d="M485.5 168 L485.5 202" stroke="#2d29a2" stroke-width="12" fill="none" stroke-linecap="round" stroke-linejoin="round"/>
<path d="M529 202 L529 179 L563 179 L563 223.5 L600 223.5" stroke="#2d29a2" stroke-width="6" fill="none" stroke-linecap="round" stroke-linejoin="round"/>
<path d="M608 140 L608 223.5 L630 223.5 L630 140" stroke="#2d29a2" stroke-width="6" fill="none" stroke-linecap="round" stroke-linejoin="round"/>
<path d="M540.5 294 L540.5 247.5 L573.5 247.5 L573.5 269.5" stroke="#2d29a2" stroke-width="6" fill="none" stroke-linecap="round" stroke-linejoin="round"/>
<path d="M529 191 L529 212.5" stroke="#2d29a2" stroke-width="12" fill="none" stroke-linecap="round" stroke-linejoin="round"/>
<path d="M597.5 191 L597.5 220" stroke="#2d29a2" stroke-width="12" fill="none" stroke-linecap="round" stroke-linejoin="round"/>
<path d="M552 202 L552 236 L529.3 236 L529.3 269.5" stroke="#2d29a2" stroke-width="12" fill="none" stroke-linecap="round" stroke-linejoin="round"/>
<path d="M574.5 168 L574.5 202" stroke="#2d29a2" stroke-width="12" fill="none" stroke-linecap="round" stroke-linejoin="round"/>
<path d="M619.5 179.5 L619.5 202" stroke="#2d29a2" stroke-width="12" fill="none" stroke-linecap="round" stroke-linejoin="round"/>
<path d="M619.5 179.5 L710 179.5" stroke="#2d29a2" stroke-width="12" fill="none" stroke-linecap="round" stroke-linejoin="round"/>
<path d="M507 259 L507 276" stroke="#2d29a2" stroke-width="12" fill="none" stroke-linecap="round" stroke-linejoin="round"/>
<path d="M552 269.5 L552 337" stroke="#2d29a2" stroke-width="12" fill="none" stroke-linecap="round" stroke-linejoin="round"/>
<path d="M574.4 260 L574.4 279" stroke="#2d29a2" stroke-width="12" fill="none" stroke-linecap="round" stroke-linejoin="round"/>
<path d="M597 269.5 L597 337" stroke="#2d29a2" stroke-width="12" fill="none" stroke-linecap="round" stroke-linejoin="round"/>
<path d="M619.5 269.5 L619.5 292.5 L687.3 292.5" stroke="#2d29a2" stroke-width="12" fill="none" stroke-linecap="round" stroke-linejoin="round"/>
<path d="M642.5 214 L642.5 292.5" stroke="#2d29a2" stroke-width="12" fill="none" stroke-linecap="round" stroke-linejoin="round"/>
<path d="M664.5 214 L664.5 292.5" stroke="#2d29a2" stroke-width="12" fill="none" stroke-linecap="round" stroke-linejoin="round"/>
<path d="M642.5 214 L664.5 214" stroke="#2d29a2" stroke-width="12" fill="none" stroke-linecap="round" stroke-linejoin="round"/>
<path d="M664 157.5 L687.5 157.5 L687.5 205" stroke="#2d29a2" stroke-width="12" fill="none" stroke-linecap="round" stroke-linejoin="round"/>
<path d="M529 359.4 L665 359.4" stroke="#2d29a2" stroke-width="12.5" fill="none" stroke-linecap="round" stroke-linejoin="round"/>
<path d="M619.5 326 L619.5 359.4" stroke="#2d29a2" stroke-width="12" fill="none" stroke-linecap="round" stroke-linejoin="round"/>
<path d="M574.3 337 L574.3 343" stroke="#2d29a2" stroke-width="12" fill="none" stroke-linecap="round" stroke-linejoin="round"/>
<path d="M484.3 427 L484.3 641" stroke="#2d29a2" stroke-width="18" fill="none" stroke-linecap="butt" stroke-linejoin="round"/>
<path d="M642 427 L642 641" stroke="#2d29a2" stroke-width="18" fill="none" stroke-linecap="butt" stroke-linejoin="round"/>
<path d="M439 553 L439 641" stroke="#2d29a2" stroke-width="18" fill="none" stroke-linecap="butt" stroke-linejoin="round"/>
<rect x="419.25" y="531" width="28.75" height="40" rx="7" fill="#2d29a2"/>
<path d="M529 553 L529 641" stroke="#2d29a2" stroke-width="18" fill="none" stroke-linecap="butt" stroke-linejoin="round"/>
<rect x="520" y="531" width="31.25" height="40" rx="7" fill="#2d29a2"/>
<path d="M597 553 L597 641" stroke="#2d29a2" stroke-width="18" fill="none" stroke-linecap="butt" stroke-linejoin="round"/>
<rect x="577.25" y="531" width="28.75" height="40" rx="7" fill="#2d29a2"/>
<path d="M687 553 L687 641" stroke="#2d29a2" stroke-width="18" fill="none" stroke-linecap="butt" stroke-linejoin="round"/>
<rect x="678" y="531" width="31" height="40" rx="7" fill="#2d29a2"/>
<path d="M450 404 L428.3 404 L428.3 440" stroke="#2d29a2" stroke-width="12" fill="none" stroke-linecap="round" stroke-linejoin="round"/>
<rect x="419.5" y="432" width="27" height="25" rx="6" fill="#2d29a2"/>
<path d="M708.3 393 L708.3 445" stroke="#2d29a2" stroke-width="11" fill="none" stroke-linecap="round" stroke-linejoin="round"/>
<rect x="681" y="432" width="33" height="25" rx="5" fill="#2d29a2"/>
<g opacity="0.86">
<path d="M462 250 L462 145 L552 145 L552 166" stroke="#cc2e34" stroke-width="12" fill="none" stroke-linecap="round" stroke-linejoin="round"/>
<path d="M428.5 247 L384 247 L366 301 L360 303" stroke="#cc2e34" stroke-width="12" fill="none" stroke-linecap="round" stroke-linejoin="round"/>
<path d="M428.5 269 L421 273 L364 324 L360 326" stroke="#cc2e34" stroke-width="12" fill="none" stroke-linecap="round" stroke-linejoin="round"/>
<path d="M450.5 269 L454 274 L496 325.5 L529.5 325.5 L529.5 303" stroke="#cc2e34" stroke-width="12" fill="none" stroke-linecap="round" stroke-linejoin="round"/>
<path d="M450.5 403.5 L642 403.5 L642 360" stroke="#cc2e34" stroke-width="11.5" fill="none" stroke-linecap="round" stroke-linejoin="miter"/>
</g>
<path d="M51 119 V202 M56.5 119 V202 M51 202 H88 V119" stroke="#a4a4a4" stroke-width="1.6" fill="none"/>
<path d="M74.5 134.8 L75.7 133.4 L78.0 133.4 L79.2 134.8 L79.2 136.1 L74.5 141.4 L79.2 141.4" stroke="#b0b0c0" stroke-width="1.15" fill="none" stroke-linejoin="round" stroke-linecap="round" transform="rotate(-90 74 142)"/>
<path d="M75.4 179.3 L77.3 177.4 L77.3 185.4" stroke="#b0b0c0" stroke-width="1.15" fill="none" stroke-linejoin="round" stroke-linecap="round" transform="rotate(-90 74 186)"/>
<line x1="64" y1="181" x2="73" y2="181" stroke="#b0b0c0" stroke-width="1"/>
<path d="M51 585 H76 V675 H51" stroke="#a4a4a4" stroke-width="1.6" fill="none"/>
<path d="M64.5 606.8 L65.7 605.4 L68.0 605.4 L69.2 606.8 L69.2 608.1 L64.5 613.4 L69.2 613.4" stroke="#b0b0c0" stroke-width="1.15" fill="none" stroke-linejoin="round" stroke-linecap="round" transform="rotate(-90 64 614)"/>
<path d="M65.4 652.3 L67.3 650.4 L67.3 658.4" stroke="#b0b0c0" stroke-width="1.15" fill="none" stroke-linejoin="round" stroke-linecap="round" transform="rotate(-90 64 659)"/>
<line x1="52" y1="654" x2="62" y2="654" stroke="#b0b0c0" stroke-width="1"/>
<rect x="50" y="225" width="12" height="22" rx="6" fill="#2fa23f"/>
<path d="M50 217 Q62 222 62.5 240" stroke="#b0b0b8" stroke-width="1.4" fill="none"/>
<line x1="51" y1="236" x2="62" y2="236" stroke="#d8d8d8" stroke-width="1"/>
<circle cx="56.5" cy="258" r="6.3" fill="#2fa23f" stroke="none" stroke-width="0"/>
<circle cx="56.5" cy="258" r="3" fill="#2d29a2" stroke="none" stroke-width="0"/>
<circle cx="56.5" cy="280" r="6.3" fill="#2fa23f" stroke="none" stroke-width="0"/>
<circle cx="56.5" cy="280" r="3" fill="#2d29a2" stroke="none" stroke-width="0"/>
<circle cx="56.5" cy="258" r="10.2" fill="none" stroke="#a8a8b4" stroke-width="2.6"/>
<path d="M56.5 258 L56.5 280" stroke="#aaa6b8" stroke-width="4" fill="none" stroke-linecap="round" stroke-linejoin="round"/>
<path d="M50.5 269H62.5M56.5 263V275" stroke="#f4f4f4" stroke-width="1" fill="none"/>
<path d="M84.0 302.4 L77.5 302.4 L77.5 292.4 L84.0 292.4M77.5 297.4 L82.4 297.4M92.9 294.1 L91.2 293.1 L88.0 293.1 L86.3 294.4 L86.3 295.9 L88.0 297.2 L91.2 297.6 L92.9 298.9 L92.9 300.4 L91.2 301.7 L88.0 301.7 L86.3 300.7M89.6 291.1 L89.6 303.7M100.0 302.4 L100.0 292.4 L95.1 299.1 L101.7 299.1M104.0 294.1 L105.6 292.4 L108.9 292.4 L110.5 294.1 L110.5 295.8 L104.0 302.4 L110.5 302.4" stroke="#a4a4a4" stroke-width="1.15" fill="none" stroke-linejoin="round" stroke-linecap="round" transform="rotate(-90 77 303)"/>
<circle cx="46" cy="392.5" r="10" fill="#2fa23f" stroke="none" stroke-width="0"/>
<circle cx="46" cy="392.5" r="10" fill="none" stroke="#a8a8c0" stroke-width="2.6"/>
<circle cx="46" cy="392.5" r="5" fill="#2d29a2" stroke="none" stroke-width="0"/>
<rect x="258.8" y="207" width="23" height="12" rx="6.0" fill="#2fa23f"/>
<circle cx="270.3" cy="213" r="3.2" fill="#2d29a2" stroke="none" stroke-width="0"/>
<rect x="326.8" y="207" width="23" height="12" rx="6.0" fill="#2fa23f"/>
<circle cx="338.3" cy="213" r="3.2" fill="#2d29a2" stroke="none" stroke-width="0"/>
<rect x="258.8" y="229.5" width="23" height="12" rx="6.0" fill="#2fa23f"/>
<circle cx="270.3" cy="235.5" r="3.2" fill="#2d29a2" stroke="none" stroke-width="0"/>
<rect x="326.8" y="229.5" width="23" height="12" rx="6.0" fill="#2fa23f"/>
<circle cx="338.3" cy="235.5" r="3.2" fill="#2d29a2" stroke="none" stroke-width="0"/>
<rect x="258.8" y="252" width="23" height="12" rx="6.0" fill="#2fa23f"/>
<circle cx="270.3" cy="258" r="3.2" fill="#2d29a2" stroke="none" stroke-width="0"/>
<rect x="326.8" y="252" width="23" height="12" rx="6.0" fill="#2fa23f"/>
<circle cx="338.3" cy="258" r="3.2" fill="#2d29a2" stroke="none" stroke-width="0"/>
<rect x="258.8" y="274.5" width="23" height="12" rx="6.0" fill="#2fa23f"/>
<circle cx="270.3" cy="280.5" r="3.2" fill="#2d29a2" stroke="none" stroke-width="0"/>
<rect x="326.8" y="274.5" width="23" height="12" rx="6.0" fill="#2fa23f"/>
<circle cx="338.3" cy="280.5" r="3.2" fill="#2d29a2" stroke="none" stroke-width="0"/>
<rect x="258.8" y="297" width="23" height="12" rx="6.0" fill="#2fa23f"/>
<circle cx="270.3" cy="303" r="3.2" fill="#2d29a2" stroke="none" stroke-width="0"/>
<rect x="326.8" y="297" width="23" height="12" rx="6.0" fill="#2fa23f"/>
<circle cx="338.3" cy="303" r="3.2" fill="#2d29a2" stroke="none" stroke-width="0"/>
<rect x="258.8" y="319.5" width="23" height="12" rx="6.0" fill="#2fa23f"/>
<circle cx="270.3" cy="325.5" r="3.2" fill="#2d29a2" stroke="none" stroke-width="0"/>
<rect x="326.8" y="319.5" width="23" height="12" rx="6.0" fill="#2fa23f"/>
<circle cx="338.3" cy="325.5" r="3.2" fill="#2d29a2" stroke="none" stroke-width="0"/>
<rect x="258.8" y="342" width="23" height="12" rx="6.0" fill="#2fa23f"/>
<circle cx="270.3" cy="348" r="3.2" fill="#2d29a2" stroke="none" stroke-width="0"/>
<rect x="326.8" y="342" width="23" height="12" rx="6.0" fill="#2fa23f"/>
<circle cx="338.3" cy="348" r="3.2" fill="#2d29a2" stroke="none" stroke-width="0"/>
<rect x="258.8" y="364.5" width="23" height="12" rx="6.0" fill="#2fa23f"/>
<circle cx="270.3" cy="370.5" r="3.2" fill="#2d29a2" stroke="none" stroke-width="0"/>
<rect x="326.8" y="364.5" width="23" height="12" rx="6.0" fill="#2fa23f"/>
<circle cx="338.3" cy="370.5" r="3.2" fill="#2d29a2" stroke="none" stroke-width="0"/>
<path d="M278 202 H330.3 V381.6 H312 A7.8 7.8 0 0 0 296.4 381.6 H278 Z" fill="none" stroke="#b0b0b0" stroke-width="1.7"/>
<path d="M349.7 230.9V224.9H355.7M364.9 224.9H370.9V230.9M370.9 240.1V246.1H364.9M355.7 246.1H349.7V240.1" stroke="#a4a4a4" stroke-width="2.4" fill="none"/>
<polygon points="369.9,239.5 364.3,245.1 356.3,245.1 350.7,239.5 350.7,231.5 356.3,225.9 364.3,225.9 369.9,231.5" fill="#2fa23f"/>
<circle cx="360.3" cy="235.5" r="8" fill="none" stroke="#86e890" stroke-width="1.2"/>
<polygon points="364.5,237.2 362.0,239.7 358.6,239.7 356.1,237.2 356.1,233.8 358.6,231.3 362.0,231.3 364.5,233.8" fill="#2d29a2"/>
<path d="M356.7 235.5H363.9M360.3 231.9V239.1" stroke="#f0e0f0" stroke-width="1" fill="none"/>
<path d="M349.7 253.4V247.4H355.7M364.9 247.4H370.9V253.4M370.9 262.6V268.6H364.9M355.7 268.6H349.7V262.6" stroke="#a4a4a4" stroke-width="2.4" fill="none"/>
<polygon points="369.9,262.0 364.3,267.6 356.3,267.6 350.7,262.0 350.7,254.0 356.3,248.4 364.3,248.4 369.9,254.0" fill="#2fa23f"/>
<circle cx="360.3" cy="258" r="8" fill="none" stroke="#86e890" stroke-width="1.2"/>
<polygon points="364.5,259.7 362.0,262.2 358.6,262.2 356.1,259.7 356.1,256.3 358.6,253.8 362.0,253.8 364.5,256.3" fill="#2d29a2"/>
<path d="M356.7 258H363.9M360.3 254.4V261.6" stroke="#f0e0f0" stroke-width="1" fill="none"/>
<path d="M349.7 275.9V269.9H355.7M364.9 269.9H370.9V275.9M370.9 285.1V291.1H364.9M355.7 291.1H349.7V285.1" stroke="#a4a4a4" stroke-width="2.4" fill="none"/>
<polygon points="369.9,284.5 364.3,290.1 356.3,290.1 350.7,284.5 350.7,276.5 356.3,270.9 364.3,270.9 369.9,276.5" fill="#2fa23f"/>
<circle cx="360.3" cy="280.5" r="8" fill="none" stroke="#86e890" stroke-width="1.2"/>
<polygon points="364.5,282.2 362.0,284.7 358.6,284.7 356.1,282.2 356.1,278.8 358.6,276.3 362.0,276.3 364.5,278.8" fill="#2d29a2"/>
<path d="M356.7 280.5H363.9M360.3 276.9V284.1" stroke="#f0e0f0" stroke-width="1" fill="none"/>
<path d="M349.7 298.4V292.4H355.7M364.9 292.4H370.9V298.4M370.9 307.6V313.6H364.9M355.7 313.6H349.7V307.6" stroke="#a4a4a4" stroke-width="2.4" fill="none"/>
<polygon points="369.9,307.0 364.3,312.6 356.3,312.6 350.7,307.0 350.7,299.0 356.3,293.4 364.3,293.4 369.9,299.0" fill="#2fa23f"/>
<circle cx="360.3" cy="303" r="8" fill="none" stroke="#86e890" stroke-width="1.2"/>
<polygon points="364.5,304.7 362.0,307.2 358.6,307.2 356.1,304.7 356.1,301.3 358.6,298.8 362.0,298.8 364.5,301.3" fill="#b02838"/>
<path d="M356.7 303H363.9M360.3 299.4V306.6" stroke="#f0e0f0" stroke-width="1" fill="none"/>
<path d="M349.7 320.9V314.9H355.7M364.9 314.9H370.9V320.9M370.9 330.1V336.1H364.9M355.7 336.1H349.7V330.1" stroke="#a4a4a4" stroke-width="2.4" fill="none"/>
<polygon points="369.9,329.5 364.3,335.1 356.3,335.1 350.7,329.5 350.7,321.5 356.3,315.9 364.3,315.9 369.9,321.5" fill="#2fa23f"/>
<circle cx="360.3" cy="325.5" r="8" fill="none" stroke="#86e890" stroke-width="1.2"/>
<polygon points="364.5,327.2 362.0,329.7 358.6,329.7 356.1,327.2 356.1,323.8 358.6,321.3 362.0,321.3 364.5,323.8" fill="#b02838"/>
<path d="M356.7 325.5H363.9M360.3 321.9V329.1" stroke="#f0e0f0" stroke-width="1" fill="none"/>
<circle cx="225.5" cy="327" r="6.3" fill="#2fa23f" stroke="none" stroke-width="0"/>
<circle cx="225.5" cy="327" r="3" fill="#2d29a2" stroke="none" stroke-width="0"/>
<circle cx="248" cy="327" r="6.3" fill="#2fa23f" stroke="none" stroke-width="0"/>
<circle cx="248" cy="327" r="3" fill="#2d29a2" stroke="none" stroke-width="0"/>
<rect x="216" y="314.5" width="39.5" height="22" rx="5" fill="none" stroke="#b0b0c0" stroke-width="1.8"/>
<rect x="233.15" y="319" width="2" height="16" rx="0" fill="#b4b4b4" stroke="none" stroke-width="0"/>
<rect x="238.35" y="319" width="2" height="16" rx="0" fill="#b4b4b4" stroke="none" stroke-width="0"/>
<line x1="225.5" y1="327" x2="248" y2="327" stroke="#e8e8e8" stroke-width="1"/>
<path d="M233.75 327H239.75M236.75 324V330" stroke="#fff" stroke-width="1" fill="none"/>
<circle cx="225.5" cy="348" r="6.3" fill="#2fa23f" stroke="none" stroke-width="0"/>
<circle cx="225.5" cy="348" r="3" fill="#2d29a2" stroke="none" stroke-width="0"/>
<circle cx="248" cy="348" r="6.3" fill="#2fa23f" stroke="none" stroke-width="0"/>
<circle cx="248" cy="348" r="3" fill="#2d29a2" stroke="none" stroke-width="0"/>
<circle cx="225.5" cy="348" r="10.2" fill="none" stroke="#a8a8b4" stroke-width="2.6"/>
<path d="M225.5 348 L248 348" stroke="#aaa6b8" stroke-width="4" fill="none" stroke-linecap="round" stroke-linejoin="round"/>
<path d="M230.75 348H242.75M236.75 342V354" stroke="#f4f4f4" stroke-width="1" fill="none"/>
<circle cx="280.5" cy="403.8" r="6.3" fill="#2fa23f" stroke="none" stroke-width="0"/>
<circle cx="280.5" cy="403.8" r="3" fill="#2d29a2" stroke="none" stroke-width="0"/>
<circle cx="304.7" cy="403.8" r="6.3" fill="#2fa23f" stroke="none" stroke-width="0"/>
<circle cx="304.7" cy="403.8" r="3" fill="#2d29a2" stroke="none" stroke-width="0"/>
<circle cx="280.5" cy="403.8" r="10.2" fill="none" stroke="#a8a8b4" stroke-width="2.6"/>
<path d="M280.5 403.8 L304.7 403.8" stroke="#aaa6b8" stroke-width="4" fill="none" stroke-linecap="round" stroke-linejoin="round"/>
<path d="M286.6 403.8H298.6M292.6 397.8V409.8" stroke="#f4f4f4" stroke-width="1" fill="none"/>
<circle cx="293.4" cy="449.7" r="6.3" fill="#2fa23f" stroke="none" stroke-width="0"/>
<circle cx="293.4" cy="449.7" r="3" fill="#2d29a2" stroke="none" stroke-width="0"/>
<circle cx="293.4" cy="426.3" r="6.3" fill="#2fa23f" stroke="none" stroke-width="0"/>
<circle cx="293.4" cy="426.3" r="3" fill="#2d29a2" stroke="none" stroke-width="0"/>
<circle cx="293.4" cy="449.7" r="10.2" fill="none" stroke="#a8a8b4" stroke-width="2.6"/>
<path d="M293.4 449.7 L293.4 426.3" stroke="#aaa6b8" stroke-width="4" fill="none" stroke-linecap="round" stroke-linejoin="round"/>
<path d="M287.4 438H299.4M293.4 432V444" stroke="#f4f4f4" stroke-width="1" fill="none"/>
<rect x="258.8" y="443" width="23" height="12" rx="6.0" fill="#2fa23f"/>
<circle cx="270.3" cy="449" r="3.2" fill="#2d29a2" stroke="none" stroke-width="0"/>
<rect x="258.8" y="466" width="23" height="12" rx="6.0" fill="#2fa23f"/>
<circle cx="270.3" cy="472" r="3.2" fill="#2d29a2" stroke="none" stroke-width="0"/>
<rect x="258.8" y="489" width="23" height="12" rx="6.0" fill="#2fa23f"/>
<circle cx="270.3" cy="495" r="3.2" fill="#2d29a2" stroke="none" stroke-width="0"/>
<path d="M285.3 453.9 A23.5 23.5 0 1 0 285.3 490.1 Z" fill="none" stroke="#b0b0c8" stroke-width="1.6"/>
<line x1="268.8" y1="449" x2="268.8" y2="495" stroke="#e0e0e0" stroke-width="1"/>
<path d="M266.3 472H274.3M270.3 468V476" stroke="#fff" stroke-width="1" fill="none"/>
<rect x="348.8" y="386.7" width="23" height="12" rx="6.0" fill="#2fa23f"/>
<circle cx="360.3" cy="392.7" r="3.2" fill="#2d29a2" stroke="none" stroke-width="0"/>
<rect x="348.8" y="409.7" width="23" height="12" rx="6.0" fill="#2fa23f"/>
<circle cx="360.3" cy="415.7" r="3.2" fill="#2d29a2" stroke="none" stroke-width="0"/>
<rect x="348.8" y="432.7" width="23" height="12" rx="6.0" fill="#2fa23f"/>
<circle cx="360.3" cy="438.7" r="3.2" fill="#2d29a2" stroke="none" stroke-width="0"/>
<path d="M345.3 397.6 A23.5 23.5 0 1 1 345.3 433.8 Z" fill="none" stroke="#b0b0c8" stroke-width="1.6"/>
<line x1="358.8" y1="392.7" x2="358.8" y2="438.7" stroke="#e0e0e0" stroke-width="1"/>
<path d="M356.3 415.7H364.3M360.3 411.7V419.7" stroke="#fff" stroke-width="1" fill="none"/>
<circle cx="295" cy="551" r="25.6" fill="none" stroke="#a8a8a8" stroke-width="3"/>
<circle cx="295" cy="551" r="21.5" fill="none" stroke="#a0a0b8" stroke-width="1.3"/>
<path d="M278.7 544.9 A17 17 0 0 1 296.2 534.0" stroke="#a0a0a0" stroke-width="1.3" fill="none"/>
<path d="M310.3 557.1 A17 17 0 0 1 292.8 568.0" stroke="#a0a0a0" stroke-width="1.3" fill="none"/>
<path d="M281.9 546.1 A13.5 13.5 0 0 1 295.9 537.5" stroke="#a0a0a0" stroke-width="1.3" fill="none"/>
<path d="M307.1 555.9 A13.5 13.5 0 0 1 293.1 564.5" stroke="#a0a0a0" stroke-width="1.3" fill="none"/>
<path d="M285.2 547.4 A10 10 0 0 1 295.5 541.0" stroke="#a0a0a0" stroke-width="1.3" fill="none"/>
<path d="M303.8 554.6 A10 10 0 0 1 293.5 561.0" stroke="#a0a0a0" stroke-width="1.3" fill="none"/>
<circle cx="281.5" cy="551" r="6.3" fill="#2fa23f" stroke="none" stroke-width="0"/>
<circle cx="281.5" cy="551" r="3.2" fill="#2d29a2" stroke="none" stroke-width="0"/>
<circle cx="304.5" cy="551" r="6.3" fill="#2fa23f" stroke="none" stroke-width="0"/>
<circle cx="304.5" cy="551" r="3.2" fill="#2d29a2" stroke="none" stroke-width="0"/>
<line x1="283" y1="551" x2="303" y2="551" stroke="#eee" stroke-width="1"/>
<line x1="293" y1="545" x2="293" y2="557" stroke="#eee" stroke-width="1"/>
<circle cx="237" cy="517" r="6.3" fill="#2fa23f" stroke="none" stroke-width="0"/>
<circle cx="237" cy="517" r="3" fill="#2d29a2" stroke="none" stroke-width="0"/>
<circle cx="259.4" cy="517" r="6.3" fill="#2fa23f" stroke="none" stroke-width="0"/>
<circle cx="259.4" cy="517" r="3" fill="#2d29a2" stroke="none" stroke-width="0"/>
<circle cx="237" cy="517" r="10.2" fill="none" stroke="#a8a8b4" stroke-width="2.6"/>
<path d="M237 517 L259.4 517" stroke="#aaa6b8" stroke-width="4" fill="none" stroke-linecap="round" stroke-linejoin="round"/>
<path d="M242.2 517H254.2M248.2 511V523" stroke="#f4f4f4" stroke-width="1" fill="none"/>
<circle cx="237" cy="551.2" r="6.3" fill="#2fa23f" stroke="none" stroke-width="0"/>
<circle cx="237" cy="551.2" r="3" fill="#2d29a2" stroke="none" stroke-width="0"/>
<circle cx="259.4" cy="551.2" r="6.3" fill="#2fa23f" stroke="none" stroke-width="0"/>
<circle cx="259.4" cy="551.2" r="3" fill="#2d29a2" stroke="none" stroke-width="0"/>
<circle cx="237" cy="551.2" r="10.2" fill="none" stroke="#a8a8b4" stroke-width="2.6"/>
<path d="M237 551.2 L259.4 551.2" stroke="#aaa6b8" stroke-width="4" fill="none" stroke-linecap="round" stroke-linejoin="round"/>
<path d="M242.2 551.2H254.2M248.2 545.2V557.2" stroke="#f4f4f4" stroke-width="1" fill="none"/>
<path d="M224 569H232M228 565V573" stroke="#5050c0" stroke-width="1.6" fill="none"/>
<circle cx="349.5" cy="517.5" r="27.3" fill="none" stroke="#b0b0c0" stroke-width="1.8"/>
<circle cx="337.8" cy="517.5" r="6.6" fill="#2fa23f" stroke="none" stroke-width="0"/>
<circle cx="337.8" cy="517.5" r="3.4" fill="#2d29a2" stroke="none" stroke-width="0"/>
<circle cx="361.2" cy="517.5" r="6.6" fill="#2fa23f" stroke="none" stroke-width="0"/>
<circle cx="361.2" cy="517.5" r="3.4" fill="#2d29a2" stroke="none" stroke-width="0"/>
<rect x="343.3" y="508" width="4.2" height="18" rx="0" fill="none" stroke="#b4b4b4" stroke-width="1.3"/>
<rect x="349.5" y="508" width="5.2" height="18" rx="0" fill="#b4b0a8" stroke="none" stroke-width="0"/>
<line x1="338.5" y1="517.5" x2="360.5" y2="517.5" stroke="#f4f4f4" stroke-width="1"/>
<path d="M333 503.5H340M336.5 500V507" stroke="#c8c8e0" stroke-width="1.3" fill="none"/>
<path d="M351.5 528.5 H364.5 M354.5 528.5 V537.5 M361 528.5 V537.5" stroke="#a8a8a8" stroke-width="1.1" fill="none"/>
<circle cx="349.5" cy="585" r="27.3" fill="none" stroke="#b0b0c0" stroke-width="1.8"/>
<circle cx="337.8" cy="585" r="6.6" fill="#2fa23f" stroke="none" stroke-width="0"/>
<circle cx="337.8" cy="585" r="3.4" fill="#2d29a2" stroke="none" stroke-width="0"/>
<circle cx="361.2" cy="585" r="6.6" fill="#2fa23f" stroke="none" stroke-width="0"/>
<circle cx="361.2" cy="585" r="3.4" fill="#2d29a2" stroke="none" stroke-width="0"/>
<rect x="343.3" y="575.5" width="4.2" height="18" rx="0" fill="none" stroke="#b4b4b4" stroke-width="1.3"/>
<rect x="349.5" y="575.5" width="5.2" height="18" rx="0" fill="#b4b0a8" stroke="none" stroke-width="0"/>
<line x1="338.5" y1="585" x2="360.5" y2="585" stroke="#f4f4f4" stroke-width="1"/>
<path d="M333 571H340M336.5 567.5V574.5" stroke="#c8c8e0" stroke-width="1.3" fill="none"/>
<path d="M351.5 596 H364.5 M354.5 596 V605 M361 596 V605" stroke="#a8a8a8" stroke-width="1.1" fill="none"/>
<rect x="224.2" y="586.3" width="91.8" height="66.7" rx="0" fill="none" stroke="#a8a8c8" stroke-width="1.8"/>
<line x1="224.2" y1="598.8" x2="316" y2="598.8" stroke="#a8a8b8" stroke-width="1.5"/>
<line x1="224.2" y1="637.5" x2="316" y2="637.5" stroke="#a8a8b8" stroke-width="1.5"/>
<rect x="316" y="637" width="4.6" height="10.5" rx="0" fill="none" stroke="#a8a8b8" stroke-width="1.5"/>
<rect x="267.65" y="602" width="6.4" height="35.5" rx="0" fill="#9c9c9c" stroke="none" stroke-width="0"/>
<rect x="233.9" y="605" width="29" height="29" rx="0" fill="#9a9a9a" stroke="none" stroke-width="0"/>
<rect x="237.4" y="608.5" width="22" height="22" rx="0" fill="#000" stroke="none" stroke-width="0"/>
<circle cx="248.4" cy="619.5" r="16.2" fill="#2fa23f" stroke="none" stroke-width="0"/>
<circle cx="248.4" cy="619.5" r="11" fill="none" stroke="#86e890" stroke-width="1.4"/>
<polygon points="253.9,621.8 250.7,625.0 246.1,625.0 242.9,621.8 242.9,617.2 246.1,614.0 250.7,614.0 253.9,617.2" fill="#5a3fb0"/>
<path d="M235.4 632.5L261.4 606.5" stroke="#b8c4b8" stroke-width="7" opacity="0.85"/>
<path d="M243.4 619.5H253.4M248.4 614.5V624.5" stroke="#fff" stroke-width="1" fill="none"/>
<rect x="278.8" y="605" width="29" height="29" rx="0" fill="#9a9a9a" stroke="none" stroke-width="0"/>
<rect x="282.3" y="608.5" width="22" height="22" rx="0" fill="#000" stroke="none" stroke-width="0"/>
<circle cx="293.3" cy="619.5" r="16.2" fill="#2fa23f" stroke="none" stroke-width="0"/>
<circle cx="293.3" cy="619.5" r="11" fill="none" stroke="#86e890" stroke-width="1.4"/>
<polygon points="298.8,621.8 295.6,625.0 291.0,625.0 287.8,621.8 287.8,617.2 291.0,614.0 295.6,614.0 298.8,617.2" fill="#5a3fb0"/>
<path d="M280.3 632.5L306.3 606.5" stroke="#b8c4b8" stroke-width="7" opacity="0.85"/>
<path d="M288.3 619.5H298.3M293.3 614.5V624.5" stroke="#fff" stroke-width="1" fill="none"/>
<line x1="261.4" y1="619.5" x2="280.3" y2="619.5" stroke="#fff" stroke-width="1"/>
<line x1="270.85" y1="610.5" x2="270.85" y2="628.5" stroke="#fff" stroke-width="1"/>
<circle cx="248.4" cy="646" r="3.6" fill="none" stroke="#a0a0d0" stroke-width="1.6"/>
<circle cx="293.3" cy="646" r="3.6" fill="none" stroke="#a0a0d0" stroke-width="1.6"/>
<rect x="401.7" y="148.5" width="13.6" height="28" rx="6.8" fill="#2fa23f"/>
<circle cx="408.5" cy="158.5" r="3" fill="#2d29a2" stroke="none" stroke-width="0"/>
<rect x="401.7" y="204.5" width="13.6" height="28" rx="6.8" fill="#2fa23f"/>
<circle cx="408.5" cy="222.5" r="3" fill="#2d29a2" stroke="none" stroke-width="0"/>
<rect x="441.7" y="148.5" width="13.6" height="28" rx="6.8" fill="#2fa23f"/>
<circle cx="448.5" cy="158.5" r="3" fill="#2d29a2" stroke="none" stroke-width="0"/>
<rect x="441.7" y="204.5" width="13.6" height="28" rx="6.8" fill="#2fa23f"/>
<circle cx="448.5" cy="222.5" r="3" fill="#2d29a2" stroke="none" stroke-width="0"/>
<path d="M404.5 163 H421 V160 H436 V163 H451.5 L455.5 168 V212 L451.5 217 H436 V220 H421 V217 H404.5 L400.5 212 V168 Z" fill="none" stroke="#a8a8b0" stroke-width="1.6"/>
<circle cx="428.5" cy="190.5" r="16" fill="none" stroke="#a8a8a8" stroke-width="1.6"/>
<rect x="417" y="179" width="23" height="23" rx="0" fill="none" stroke="#a0a0a0" stroke-width="1"/>
<polygon points="422.5,190.5 428.5,184.5 434.5,190.5 428.5,196.5" fill="none" stroke="#ccc" stroke-width="0.9"/>
<circle cx="428.5" cy="190.5" r="2.4" fill="#ccc" stroke="none" stroke-width="0"/>
<path d="M420.5 190.5H436.5M428.5 182.5V198.5" stroke="#eee" stroke-width="1" fill="none"/>
<circle cx="408.5" cy="171.5" r="5" fill="#48b858" stroke="#86e890" stroke-width="1"/>
<circle cx="408.5" cy="210" r="5" fill="#48b858" stroke="#86e890" stroke-width="1"/>
<circle cx="448.5" cy="171.5" r="5" fill="#48b858" stroke="#86e890" stroke-width="1"/>
<circle cx="448.5" cy="210" r="5" fill="#48b858" stroke="#86e890" stroke-width="1"/>
<rect x="401.2" y="180.5" width="2.3" height="20" rx="0" fill="none" stroke="#a8a8b0" stroke-width="1"/>
<rect x="453" y="180.5" width="2.1" height="20" rx="0" fill="none" stroke="#a8a8b0" stroke-width="1"/>
<line x1="409.5" y1="177.5" x2="409.5" y2="203.5" stroke="#a8a8c8" stroke-width="1.4"/>
<line x1="448" y1="177.5" x2="448" y2="203.5" stroke="#a8a8c8" stroke-width="1.4"/>
<path d="M414.5 171.5 H423.5 L431.5 168.5 M431.5 171.5 H442.5" stroke="#b0b0b0" stroke-width="1.3" fill="none"/>
<rect x="401.7" y="284.3" width="13.6" height="28" rx="6.8" fill="#2fa23f"/>
<circle cx="408.5" cy="294.3" r="3" fill="#2d29a2" stroke="none" stroke-width="0"/>
<rect x="401.7" y="340.3" width="13.6" height="28" rx="6.8" fill="#2fa23f"/>
<circle cx="408.5" cy="358.3" r="3" fill="#2d29a2" stroke="none" stroke-width="0"/>
<rect x="441.7" y="284.3" width="13.6" height="28" rx="6.8" fill="#2fa23f"/>
<circle cx="448.5" cy="294.3" r="3" fill="#2d29a2" stroke="none" stroke-width="0"/>
<rect x="441.7" y="340.3" width="13.6" height="28" rx="6.8" fill="#2fa23f"/>
<circle cx="448.5" cy="358.3" r="3" fill="#2d29a2" stroke="none" stroke-width="0"/>
<path d="M404.5 298.8 H421 V295.8 H436 V298.8 H451.5 L455.5 303.8 V347.8 L451.5 352.8 H436 V355.8 H421 V352.8 H404.5 L400.5 347.8 V303.8 Z" fill="none" stroke="#a8a8b0" stroke-width="1.6"/>
<circle cx="428.5" cy="326.3" r="16" fill="none" stroke="#a8a8a8" stroke-width="1.6"/>
<rect x="417" y="314.8" width="23" height="23" rx="0" fill="none" stroke="#a0a0a0" stroke-width="1"/>
<polygon points="422.5,326.3 428.5,320.3 434.5,326.3 428.5,332.3" fill="none" stroke="#ccc" stroke-width="0.9"/>
<circle cx="428.5" cy="326.3" r="2.4" fill="#ccc" stroke="none" stroke-width="0"/>
<path d="M420.5 326.3H436.5M428.5 318.3V334.3" stroke="#eee" stroke-width="1" fill="none"/>
<circle cx="408.5" cy="307.3" r="5" fill="#48b858" stroke="#86e890" stroke-width="1"/>
<circle cx="408.5" cy="345.8" r="5" fill="#48b858" stroke="#86e890" stroke-width="1"/>
<circle cx="448.5" cy="307.3" r="5" fill="#48b858" stroke="#86e890" stroke-width="1"/>
<circle cx="448.5" cy="345.8" r="5" fill="#48b858" stroke="#86e890" stroke-width="1"/>
<rect x="401.2" y="316.3" width="2.3" height="20" rx="0" fill="none" stroke="#a8a8b0" stroke-width="1"/>
<rect x="453" y="316.3" width="2.1" height="20" rx="0" fill="none" stroke="#a8a8b0" stroke-width="1"/>
<line x1="409.5" y1="313.3" x2="409.5" y2="339.3" stroke="#a8a8c8" stroke-width="1.4"/>
<line x1="448" y1="313.3" x2="448" y2="339.3" stroke="#a8a8c8" stroke-width="1.4"/>
<path d="M414.5 307.3 H423.5 L431.5 304.3 M431.5 307.3 H442.5" stroke="#b0b0b0" stroke-width="1.3" fill="none"/>
<path d="M418 243.2V236.7H424.5M432.7 236.7H439.2V243.2M439.2 251.4V257.9H432.7M424.5 257.9H418V251.4" stroke="#b8b0b0" stroke-width="2" fill="none"/>
<path d="M418 265.1V258.6H424.5M432.7 258.6H439.2V265.1M439.2 273.3V279.8H432.7M424.5 279.8H418V273.3" stroke="#b8b0b0" stroke-width="2" fill="none"/>
<path d="M439.9 243.2V236.7H446.4M454.6 236.7H461.1V243.2M461.1 251.4V257.9H454.6M446.4 257.9H439.9V251.4" stroke="#b8b0b0" stroke-width="2" fill="none"/>
<path d="M439.9 265.1V258.6H446.4M454.6 258.6H461.1V265.1M461.1 273.3V279.8H454.6M446.4 279.8H439.9V273.3" stroke="#b8b0b0" stroke-width="2" fill="none"/>
<polygon points="438.2,251.3 432.6,256.9 424.6,256.9 419.0,251.3 419.0,243.3 424.6,237.7 432.6,237.7 438.2,243.3" fill="#2fa23f"/>
<circle cx="428.6" cy="247.3" r="8" fill="none" stroke="#86e890" stroke-width="1.2"/>
<polygon points="433.0,249.1 430.4,251.7 426.8,251.7 424.2,249.1 424.2,245.5 426.8,242.9 430.4,242.9 433.0,245.5" fill="#b83040"/>
<path d="M425 247.3H432.2M428.6 243.7V250.9" stroke="#ffe8f0" stroke-width="1" fill="none"/>
<polygon points="438.2,273.2 432.6,278.8 424.6,278.8 419.0,273.2 419.0,265.2 424.6,259.6 432.6,259.6 438.2,265.2" fill="#2fa23f"/>
<circle cx="428.6" cy="269.2" r="8" fill="none" stroke="#86e890" stroke-width="1.2"/>
<polygon points="433.0,271.0 430.4,273.6 426.8,273.6 424.2,271.0 424.2,267.4 426.8,264.8 430.4,264.8 433.0,267.4" fill="#b83040"/>
<path d="M425 269.2H432.2M428.6 265.6V272.8" stroke="#ffe8f0" stroke-width="1" fill="none"/>
<polygon points="460.1,251.3 454.5,256.9 446.5,256.9 440.9,251.3 440.9,243.3 446.5,237.7 454.5,237.7 460.1,243.3" fill="#2fa23f"/>
<circle cx="450.5" cy="247.3" r="8" fill="none" stroke="#86e890" stroke-width="1.2"/>
<polygon points="454.9,249.1 452.3,251.7 448.7,251.7 446.1,249.1 446.1,245.5 448.7,242.9 452.3,242.9 454.9,245.5" fill="#b83040"/>
<path d="M446.9 247.3H454.1M450.5 243.7V250.9" stroke="#ffe8f0" stroke-width="1" fill="none"/>
<polygon points="460.1,273.2 454.5,278.8 446.5,278.8 440.9,273.2 440.9,265.2 446.5,259.6 454.5,259.6 460.1,265.2" fill="#2fa23f"/>
<circle cx="450.5" cy="269.2" r="8" fill="none" stroke="#86e890" stroke-width="1.2"/>
<polygon points="454.9,271.0 452.3,273.6 448.7,273.6 446.1,271.0 446.1,267.4 448.7,264.8 452.3,264.8 454.9,267.4" fill="#b83040"/>
<path d="M446.9 269.2H454.1M450.5 265.6V272.8" stroke="#ffe8f0" stroke-width="1" fill="none"/>
<rect x="478.5" y="191" width="12" height="22" rx="6.0" fill="#2fa23f"/>
<circle cx="484.5" cy="202" r="3.2" fill="#2d29a2" stroke="none" stroke-width="0"/>
<rect x="478.5" y="258.5" width="12" height="22" rx="6.0" fill="#2fa23f"/>
<circle cx="484.5" cy="269.5" r="3.2" fill="#2d29a2" stroke="none" stroke-width="0"/>
<rect x="501" y="191" width="12" height="22" rx="6.0" fill="#2fa23f"/>
<circle cx="507" cy="202" r="3.2" fill="#2d29a2" stroke="none" stroke-width="0"/>
<rect x="501" y="258.5" width="12" height="22" rx="6.0" fill="#2fa23f"/>
<circle cx="507" cy="269.5" r="3.2" fill="#2d29a2" stroke="none" stroke-width="0"/>
<rect x="523.3" y="191" width="12" height="22" rx="6.0" fill="#2fa23f"/>
<circle cx="529.3" cy="202" r="3.2" fill="#2d29a2" stroke="none" stroke-width="0"/>
<rect x="523.3" y="258.5" width="12" height="22" rx="6.0" fill="#2fa23f"/>
<circle cx="529.3" cy="269.5" r="3.2" fill="#2d29a2" stroke="none" stroke-width="0"/>
<rect x="546" y="191" width="12" height="22" rx="6.0" fill="#2fa23f"/>
<circle cx="552" cy="202" r="3.2" fill="#2d29a2" stroke="none" stroke-width="0"/>
<rect x="546" y="258.5" width="12" height="22" rx="6.0" fill="#2fa23f"/>
<circle cx="552" cy="269.5" r="3.2" fill="#2d29a2" stroke="none" stroke-width="0"/>
<rect x="568.4" y="191" width="12" height="22" rx="6.0" fill="#2fa23f"/>
<circle cx="574.4" cy="202" r="3.2" fill="#2d29a2" stroke="none" stroke-width="0"/>
<rect x="568.4" y="258.5" width="12" height="22" rx="6.0" fill="#2fa23f"/>
<circle cx="574.4" cy="269.5" r="3.2" fill="#2d29a2" stroke="none" stroke-width="0"/>
<rect x="591" y="191" width="12" height="22" rx="6.0" fill="#2fa23f"/>
<circle cx="597" cy="202" r="3.2" fill="#2d29a2" stroke="none" stroke-width="0"/>
<rect x="591" y="258.5" width="12" height="22" rx="6.0" fill="#2fa23f"/>
<circle cx="597" cy="269.5" r="3.2" fill="#2d29a2" stroke="none" stroke-width="0"/>
<rect x="613.5" y="191" width="12" height="22" rx="6.0" fill="#2fa23f"/>
<circle cx="619.5" cy="202" r="3.2" fill="#2d29a2" stroke="none" stroke-width="0"/>
<rect x="613.5" y="258.5" width="12" height="22" rx="6.0" fill="#2fa23f"/>
<circle cx="619.5" cy="269.5" r="3.2" fill="#2d29a2" stroke="none" stroke-width="0"/>
<path d="M473.3 209 H630.5 V228 A8 8 0 0 0 630.5 244 V260.8 H473.3 Z" fill="none" stroke="#b0b0b0" stroke-width="1.7"/>
<path d="M543 235.6H561M552 226.6V244.6" stroke="#e8e8e8" stroke-width="1.2" fill="none"/>
<circle cx="518" cy="168" r="6.3" fill="#2fa23f" stroke="none" stroke-width="0"/>
<circle cx="518" cy="168" r="3" fill="#2d29a2" stroke="none" stroke-width="0"/>
<circle cx="540.5" cy="168" r="6.3" fill="#2fa23f" stroke="none" stroke-width="0"/>
<circle cx="540.5" cy="168" r="3" fill="#2d29a2" stroke="none" stroke-width="0"/>
<circle cx="518" cy="168" r="10.2" fill="none" stroke="#a8a8b4" stroke-width="2.6"/>
<path d="M518 168 L540.5 168" stroke="#aaa6b8" stroke-width="4" fill="none" stroke-linecap="round" stroke-linejoin="round"/>
<path d="M523.25 168H535.25M529.25 162V174" stroke="#f4f4f4" stroke-width="1" fill="none"/>
<rect x="547" y="163" width="10.5" height="10.5" fill="#2fa23f"/><rect x="549.8" y="165.8" width="5" height="5" fill="#c03048"/>
<circle cx="574.5" cy="145" r="6.3" fill="#2fa23f" stroke="none" stroke-width="0"/>
<circle cx="574.5" cy="145" r="3" fill="#2d29a2" stroke="none" stroke-width="0"/>
<circle cx="574.5" cy="167.6" r="6.3" fill="#2fa23f" stroke="none" stroke-width="0"/>
<circle cx="574.5" cy="167.6" r="3" fill="#2d29a2" stroke="none" stroke-width="0"/>
<rect x="563.9" y="136.4" width="21.2" height="39.8" rx="4" fill="none" stroke="#b0b0c8" stroke-width="1.8"/>
<rect x="566.5" y="152.7" width="16" height="2" rx="0" fill="#b4b4b4" stroke="none" stroke-width="0"/>
<rect x="566.5" y="157.9" width="16" height="2" rx="0" fill="#b4b4b4" stroke="none" stroke-width="0"/>
<line x1="574.5" y1="145" x2="574.5" y2="167.6" stroke="#e8e8e8" stroke-width="1"/>
<path d="M571.5 156.3H577.5M574.5 153.3V159.3" stroke="#fff" stroke-width="1" fill="none"/>
<circle cx="619.7" cy="179.4" r="6.3" fill="#2fa23f" stroke="none" stroke-width="0"/>
<circle cx="619.7" cy="179.4" r="3" fill="#2d29a2" stroke="none" stroke-width="0"/>
<circle cx="642" cy="179.4" r="6.3" fill="#2fa23f" stroke="none" stroke-width="0"/>
<circle cx="642" cy="179.4" r="3" fill="#2d29a2" stroke="none" stroke-width="0"/>
<circle cx="619.7" cy="179.4" r="10.2" fill="none" stroke="#a8a8b4" stroke-width="2.6"/>
<path d="M619.7 179.4 L642 179.4" stroke="#aaa6b8" stroke-width="4" fill="none" stroke-linecap="round" stroke-linejoin="round"/>
<path d="M624.85 179.4H636.85M630.85 173.4V185.4" stroke="#f4f4f4" stroke-width="1" fill="none"/>
<rect x="652.7" y="128.3" width="23" height="12" rx="6.0" fill="#2fa23f"/>
<circle cx="664.2" cy="134.3" r="3.2" fill="#2d29a2" stroke="none" stroke-width="0"/>
<rect x="652.7" y="151.3" width="23" height="12" rx="6.0" fill="#2fa23f"/>
<circle cx="664.2" cy="157.3" r="3.2" fill="#2d29a2" stroke="none" stroke-width="0"/>
<rect x="652.7" y="174.3" width="23" height="12" rx="6.0" fill="#2fa23f"/>
<circle cx="664.2" cy="180.3" r="3.2" fill="#2d29a2" stroke="none" stroke-width="0"/>
<path d="M649.2 138.6 A24 24 0 1 1 649.2 176.0 Z" fill="none" stroke="#b0b0c8" stroke-width="1.6"/>
<line x1="662.7" y1="134.3" x2="662.7" y2="180.3" stroke="#e0e0e0" stroke-width="1"/>
<path d="M660.2 157.3H668.2M664.2 153.3V161.3" stroke="#fff" stroke-width="1" fill="none"/>
<circle cx="687.5" cy="179.3" r="6.6" fill="#2fa23f" stroke="none" stroke-width="0"/>
<circle cx="687.5" cy="179.3" r="3.4" fill="#2d29a2" stroke="none" stroke-width="0"/>
<line x1="687.5" y1="187" x2="687.5" y2="201" stroke="#b0b0c0" stroke-width="3"/>
<path d="M675.5 202 H699.5 L687.5 222.5 Z" fill="none" stroke="#a8a8a8" stroke-width="2.6" stroke-linejoin="miter"/>
<path d="M674.7 225 H700 M687 225 V236.5 M699 225 V236.5" stroke="#a8a8a8" stroke-width="2.6" fill="none"/>
<path d="M684 212H691M687.5 208.5V215.5" stroke="#ddd" stroke-width="1" fill="none"/>
<circle cx="664.4" cy="213.5" r="6.3" fill="#2fa23f" stroke="none" stroke-width="0"/>
<circle cx="664.4" cy="213.5" r="3" fill="#2d29a2" stroke="none" stroke-width="0"/>
<circle cx="664.4" cy="235.3" r="6.3" fill="#2fa23f" stroke="none" stroke-width="0"/>
<circle cx="664.4" cy="235.3" r="3" fill="#2d29a2" stroke="none" stroke-width="0"/>
<circle cx="664.4" cy="213.5" r="10.2" fill="none" stroke="#a8a8b4" stroke-width="2.6"/>
<path d="M664.4 213.5 L664.4 235.3" stroke="#aaa6b8" stroke-width="4" fill="none" stroke-linecap="round" stroke-linejoin="round"/>
<path d="M658.4 224.4H670.4M664.4 218.4V230.4" stroke="#f4f4f4" stroke-width="1" fill="none"/>
<circle cx="642" cy="258" r="6.3" fill="#2fa23f" stroke="none" stroke-width="0"/>
<circle cx="642" cy="258" r="3" fill="#2d29a2" stroke="none" stroke-width="0"/>
<circle cx="642" cy="280" r="6.3" fill="#2fa23f" stroke="none" stroke-width="0"/>
<circle cx="642" cy="280" r="3" fill="#2d29a2" stroke="none" stroke-width="0"/>
<rect x="631.4" y="249.4" width="21.2" height="39.2" rx="4" fill="none" stroke="#b0b0c8" stroke-width="1.8"/>
<rect x="634" y="265.4" width="16" height="2" rx="0" fill="#b4b4b4" stroke="none" stroke-width="0"/>
<rect x="634" y="270.6" width="16" height="2" rx="0" fill="#b4b4b4" stroke="none" stroke-width="0"/>
<line x1="642" y1="258" x2="642" y2="280" stroke="#e8e8e8" stroke-width="1"/>
<path d="M639 269H645M642 266V272" stroke="#fff" stroke-width="1" fill="none"/>
<circle cx="664.4" cy="258" r="6.3" fill="#2fa23f" stroke="none" stroke-width="0"/>
<circle cx="664.4" cy="258" r="3" fill="#2d29a2" stroke="none" stroke-width="0"/>
<circle cx="664.4" cy="280" r="6.3" fill="#2fa23f" stroke="none" stroke-width="0"/>
<circle cx="664.4" cy="280" r="3" fill="#2d29a2" stroke="none" stroke-width="0"/>
<rect x="653.8" y="249.4" width="21.2" height="39.2" rx="4" fill="none" stroke="#b0b0c8" stroke-width="1.8"/>
<rect x="656.4" y="265.4" width="16" height="2" rx="0" fill="#b4b4b4" stroke="none" stroke-width="0"/>
<rect x="656.4" y="270.6" width="16" height="2" rx="0" fill="#b4b4b4" stroke="none" stroke-width="0"/>
<line x1="664.4" y1="258" x2="664.4" y2="280" stroke="#e8e8e8" stroke-width="1"/>
<path d="M661.4 269H667.4M664.4 266V272" stroke="#fff" stroke-width="1" fill="none"/>
<path d="M676.9 242.4V236.4H682.9M692.1 236.4H698.1V242.4M698.1 251.6V257.6H692.1M682.9 257.6H676.9V251.6" stroke="#a4a4a4" stroke-width="2.4" fill="none"/>
<polygon points="697.1,251.0 691.5,256.6 683.5,256.6 677.9,251.0 677.9,243.0 683.5,237.4 691.5,237.4 697.1,243.0" fill="#2fa23f"/>
<circle cx="687.5" cy="247" r="8" fill="none" stroke="#86e890" stroke-width="1.2"/>
<polygon points="691.7,248.7 689.2,251.2 685.8,251.2 683.3,248.7 683.3,245.3 685.8,242.8 689.2,242.8 691.7,245.3" fill="#2d29a2"/>
<path d="M683.9 247H691.1M687.5 243.4V250.6" stroke="#f0e0f0" stroke-width="1" fill="none"/>
<circle cx="496" cy="303.5" r="6.3" fill="#2fa23f" stroke="none" stroke-width="0"/>
<circle cx="496" cy="303.5" r="3" fill="#2d29a2" stroke="none" stroke-width="0"/>
<circle cx="518.6" cy="303.5" r="6.3" fill="#2fa23f" stroke="none" stroke-width="0"/>
<circle cx="518.6" cy="303.5" r="3" fill="#2d29a2" stroke="none" stroke-width="0"/>
<circle cx="496" cy="303.5" r="10.2" fill="none" stroke="#a8a8b4" stroke-width="2.6"/>
<path d="M496 303.5 L518.6 303.5" stroke="#aaa6b8" stroke-width="4" fill="none" stroke-linecap="round" stroke-linejoin="round"/>
<path d="M501.3 303.5H513.3M507.3 297.5V309.5" stroke="#f4f4f4" stroke-width="1" fill="none"/>
<rect x="524.5" y="298" width="10.5" height="10.5" fill="#2fa23f"/><rect x="527.3" y="300.8" width="5" height="5" fill="#c03048"/>
<circle cx="552" cy="302" r="6.3" fill="#2fa23f" stroke="none" stroke-width="0"/>
<circle cx="552" cy="302" r="3" fill="#2d29a2" stroke="none" stroke-width="0"/>
<circle cx="552" cy="325" r="6.3" fill="#2fa23f" stroke="none" stroke-width="0"/>
<circle cx="552" cy="325" r="3" fill="#2d29a2" stroke="none" stroke-width="0"/>
<rect x="541.4" y="293.4" width="21.2" height="40.2" rx="4" fill="none" stroke="#b0b0c8" stroke-width="1.8"/>
<rect x="544" y="309.9" width="16" height="2" rx="0" fill="#b4b4b4" stroke="none" stroke-width="0"/>
<rect x="544" y="315.1" width="16" height="2" rx="0" fill="#b4b4b4" stroke="none" stroke-width="0"/>
<line x1="552" y1="302" x2="552" y2="325" stroke="#e8e8e8" stroke-width="1"/>
<path d="M549 313.5H555M552 310.5V316.5" stroke="#fff" stroke-width="1" fill="none"/>
<circle cx="597" cy="314" r="6.3" fill="#2fa23f" stroke="none" stroke-width="0"/>
<circle cx="597" cy="314" r="3" fill="#2d29a2" stroke="none" stroke-width="0"/>
<circle cx="597" cy="292" r="6.3" fill="#2fa23f" stroke="none" stroke-width="0"/>
<circle cx="597" cy="292" r="3" fill="#2d29a2" stroke="none" stroke-width="0"/>
<circle cx="597" cy="314" r="10.2" fill="none" stroke="#a8a8b4" stroke-width="2.6"/>
<path d="M597 314 L597 292" stroke="#aaa6b8" stroke-width="4" fill="none" stroke-linecap="round" stroke-linejoin="round"/>
<path d="M591 303H603M597 297V309" stroke="#f4f4f4" stroke-width="1" fill="none"/>
<rect x="545.8" y="321" width="12.4" height="28" rx="6.2" fill="#2fa23f"/>
<rect x="568.1" y="321" width="12.4" height="28" rx="6.2" fill="#2fa23f"/>
<rect x="591.1" y="321" width="12.4" height="28" rx="6.2" fill="#2fa23f"/>
<path d="M555.5 351 H595 L598 344 M555.5 351 L551.5 343 M561 318 A24 24 0 0 1 586 316" stroke="#a8a8b0" stroke-width="1.6" fill="none"/>
<line x1="552" y1="337.7" x2="597" y2="337.7" stroke="#e8e8e8" stroke-width="1"/>
<path d="M569.3 337.7H579.3M574.3 332.7V342.7" stroke="#fff" stroke-width="1" fill="none"/>
<line x1="552" y1="322" x2="552" y2="348" stroke="#d0f0d0" stroke-width="1"/>
<line x1="597" y1="322" x2="597" y2="348" stroke="#d0f0d0" stroke-width="1"/>
<path d="M608.7 321.6V315.6H614.7M623.9 315.6H629.9V321.6M629.9 330.8V336.8H623.9M614.7 336.8H608.7V330.8" stroke="#a4a4a4" stroke-width="2.4" fill="none"/>
<polygon points="628.9,330.2 623.3,335.8 615.3,335.8 609.7,330.2 609.7,322.2 615.3,316.6 623.3,316.6 628.9,322.2" fill="#2fa23f"/>
<circle cx="619.3" cy="326.2" r="8" fill="none" stroke="#86e890" stroke-width="1.2"/>
<polygon points="623.5,327.9 621.0,330.4 617.6,330.4 615.1,327.9 615.1,324.5 617.6,322.0 621.0,322.0 623.5,324.5" fill="#2d29a2"/>
<path d="M615.7 326.2H622.9M619.3 322.6V329.8" stroke="#f0e0f0" stroke-width="1" fill="none"/>
<path d="M631.7 355.1V349.1H637.7M646.9 349.1H652.9V355.1M652.9 364.3V370.3H646.9M637.7 370.3H631.7V364.3" stroke="#a4a4a4" stroke-width="2.4" fill="none"/>
<polygon points="651.9,363.7 646.3,369.3 638.3,369.3 632.7,363.7 632.7,355.7 638.3,350.1 646.3,350.1 651.9,355.7" fill="#2fa23f"/>
<circle cx="642.3" cy="359.7" r="8" fill="none" stroke="#86e890" stroke-width="1.2"/>
<polygon points="646.5,361.4 644.0,363.9 640.6,363.9 638.1,361.4 638.1,358.0 640.6,355.5 644.0,355.5 646.5,358.0" fill="#b02838"/>
<path d="M638.7 359.7H645.9M642.3 356.1V363.3" stroke="#f0e0f0" stroke-width="1" fill="none"/>
<path d="M676.9 321.6V315.6H682.9M692.1 315.6H698.1V321.6M698.1 330.8V336.8H692.1M682.9 336.8H676.9V330.8" stroke="#a4a4a4" stroke-width="2.4" fill="none"/>
<polygon points="697.1,330.2 691.5,335.8 683.5,335.8 677.9,330.2 677.9,322.2 683.5,316.6 691.5,316.6 697.1,322.2" fill="#2fa23f"/>
<circle cx="687.5" cy="326.2" r="8" fill="none" stroke="#86e890" stroke-width="1.2"/>
<polygon points="691.7,327.9 689.2,330.4 685.8,330.4 683.3,327.9 683.3,324.5 685.8,322.0 689.2,322.0 691.7,324.5" fill="#2d29a2"/>
<path d="M683.9 326.2H691.1M687.5 322.6V329.8" stroke="#f0e0f0" stroke-width="1" fill="none"/>
<line x1="629" y1="326.2" x2="643" y2="326.2" stroke="#a8a8a8" stroke-width="2.6"/>
<path d="M643.5 315 V337.5 L663 326.2 Z" fill="none" stroke="#a8a8a8" stroke-width="2.6"/>
<path d="M665 314.5 V338 M665 315.5 H677 M665 326.2 H677" stroke="#a8a8a8" stroke-width="2.6" fill="none"/>
<path d="M649.5 326.2H656.5M653 322.7V329.7" stroke="#ddd" stroke-width="1" fill="none"/>
<path d="M439.8 399.9V393.9H445.8M455 393.9H461V399.9M461 409.1V415.1H455M445.8 415.1H439.8V409.1" stroke="#a4a4a4" stroke-width="2.4" fill="none"/>
<polygon points="460.0,408.5 454.4,414.1 446.4,414.1 440.8,408.5 440.8,400.5 446.4,394.9 454.4,394.9 460.0,400.5" fill="#2fa23f"/>
<circle cx="450.4" cy="404.5" r="8" fill="none" stroke="#86e890" stroke-width="1.2"/>
<polygon points="454.6,406.2 452.1,408.7 448.7,408.7 446.2,406.2 446.2,402.8 448.7,400.3 452.1,400.3 454.6,402.8" fill="#b02838"/>
<path d="M446.8 404.5H454M450.4 400.9V408.1" stroke="#f0e0f0" stroke-width="1" fill="none"/>
<path d="M698.8 388.8V382.8H704.8M714 382.8H720V388.8M720 398V404H714M704.8 404H698.8V398" stroke="#a4a4a4" stroke-width="2.4" fill="none"/>
<polygon points="719.0,397.4 713.4,403.0 705.4,403.0 699.8,397.4 699.8,389.4 705.4,383.8 713.4,383.8 719.0,389.4" fill="#2fa23f"/>
<circle cx="709.4" cy="393.4" r="8" fill="none" stroke="#86e890" stroke-width="1.2"/>
<polygon points="713.6,395.1 711.1,397.6 707.7,397.6 705.2,395.1 705.2,391.7 707.7,389.2 711.1,389.2 713.6,391.7" fill="#2d29a2"/>
<path d="M705.8 393.4H713M709.4 389.8V397" stroke="#f0e0f0" stroke-width="1" fill="none"/>
<rect x="412" y="410" width="144" height="198" rx="0" fill="none" stroke="#a8a8a8" stroke-width="1.8"/>
<rect x="569.3" y="410" width="145.2" height="198" rx="0" fill="none" stroke="#a8a8a8" stroke-width="1.8"/>
<circle cx="431.25" cy="445.4" r="11.4" fill="#2fa23f" stroke="none" stroke-width="0"/>
<circle cx="431.25" cy="445.4" r="5.4" fill="#2d29a2" stroke="none" stroke-width="0"/>
<circle cx="537.5" cy="445.4" r="11.4" fill="#2fa23f" stroke="none" stroke-width="0"/>
<circle cx="537.5" cy="445.4" r="5.4" fill="#000" stroke="none" stroke-width="0"/>
<circle cx="589.25" cy="445.4" r="11.4" fill="#2fa23f" stroke="none" stroke-width="0"/>
<circle cx="589.25" cy="445.4" r="5.4" fill="#000" stroke="none" stroke-width="0"/>
<circle cx="695.5" cy="445.4" r="11.4" fill="#2fa23f" stroke="none" stroke-width="0"/>
<circle cx="695.5" cy="445.4" r="5.4" fill="#2d29a2" stroke="none" stroke-width="0"/>
<circle cx="431.25" cy="553.3" r="11.4" fill="#2fa23f" stroke="none" stroke-width="0"/>
<circle cx="431.25" cy="553.3" r="5.4" fill="#2d29a2" stroke="none" stroke-width="0"/>
<circle cx="539.25" cy="553.3" r="11.4" fill="#2fa23f" stroke="none" stroke-width="0"/>
<circle cx="539.25" cy="553.3" r="5.4" fill="#2d29a2" stroke="none" stroke-width="0"/>
<circle cx="589.25" cy="553.3" r="11.4" fill="#2fa23f" stroke="none" stroke-width="0"/>
<circle cx="589.25" cy="553.3" r="5.4" fill="#2d29a2" stroke="none" stroke-width="0"/>
<circle cx="697" cy="553.3" r="11.4" fill="#2fa23f" stroke="none" stroke-width="0"/>
<circle cx="697" cy="553.3" r="5.4" fill="#2d29a2" stroke="none" stroke-width="0"/>
<path d="M469.9 417.4V412.4H474.9M494.1 412.4H499.1V417.4M499.1 436.6V441.6H494.1M474.9 441.6H469.9V436.6" stroke="#a4a4a4" stroke-width="2.4" fill="none"/>
<polygon points="498.9,433.0 490.5,441.4 478.5,441.4 470.1,433.0 470.1,421.0 478.5,412.6 490.5,412.6 498.9,421.0" fill="#2fa23f"/>
<circle cx="484.5" cy="427" r="10" fill="none" stroke="#86e890" stroke-width="1.3"/>
<polygon points="489.5,429.1 486.6,432.0 482.4,432.0 479.5,429.1 479.5,424.9 482.4,422.0 486.6,422.0 489.5,424.9" fill="#2d29a2"/>
<path d="M480 427H489M484.5 422.5V431.5" stroke="#f0e8ff" stroke-width="1" fill="none"/>
<path d="M627.7 417.7V412.7H632.7M651.9 412.7H656.9V417.7M656.9 436.9V441.9H651.9M632.7 441.9H627.7V436.9" stroke="#a4a4a4" stroke-width="2.4" fill="none"/>
<polygon points="656.7,433.3 648.3,441.7 636.3,441.7 627.9,433.3 627.9,421.3 636.3,412.9 648.3,412.9 656.7,421.3" fill="#2fa23f"/>
<circle cx="642.3" cy="427.3" r="10" fill="none" stroke="#86e890" stroke-width="1.3"/>
<polygon points="647.3,429.4 644.4,432.3 640.2,432.3 637.3,429.4 637.3,425.2 640.2,422.3 644.4,422.3 647.3,425.2" fill="#2d29a2"/>
<path d="M637.8 427.3H646.8M642.3 422.8V431.8" stroke="#f0e8ff" stroke-width="1" fill="none"/>
<path d="M475.5 506H493.5M484.5 497V515" stroke="#e8e8e8" stroke-width="1.2" fill="none"/>
<path d="M633.3 506H651.3M642.3 497V515" stroke="#e8e8e8" stroke-width="1.2" fill="none"/>
<rect x="416.5" y="609.5" width="89.5" height="66" rx="0" fill="none" stroke="#a8a8c8" stroke-width="1.8"/>
<line x1="416.5" y1="622" x2="506" y2="622" stroke="#a8a8b8" stroke-width="1.5"/>
<line x1="416.5" y1="660" x2="506" y2="660" stroke="#a8a8b8" stroke-width="1.5"/>
<rect x="506" y="659.5" width="4.6" height="10.5" rx="0" fill="none" stroke="#a8a8b8" stroke-width="1.5"/>
<rect x="458.9" y="623.9" width="6.4" height="36.1" rx="0" fill="#9c9c9c" stroke="none" stroke-width="0"/>
<rect x="425.2" y="626.9" width="29" height="29" rx="0" fill="#9a9a9a" stroke="none" stroke-width="0"/>
<rect x="428.7" y="630.4" width="22" height="22" rx="0" fill="#000" stroke="none" stroke-width="0"/>
<circle cx="439.7" cy="641.4" r="16.2" fill="#2fa23f" stroke="none" stroke-width="0"/>
<circle cx="439.7" cy="641.4" r="11" fill="none" stroke="#86e890" stroke-width="1.4"/>
<polygon points="445.2,643.7 442.0,646.9 437.4,646.9 434.2,643.7 434.2,639.1 437.4,635.9 442.0,635.9 445.2,639.1" fill="#5a3fb0"/>
<path d="M426.7 654.4L452.7 628.4" stroke="#b8c4b8" stroke-width="7" opacity="0.85"/>
<path d="M434.7 641.4H444.7M439.7 636.4V646.4" stroke="#fff" stroke-width="1" fill="none"/>
<rect x="470" y="626.9" width="29" height="29" rx="0" fill="#9a9a9a" stroke="none" stroke-width="0"/>
<rect x="473.5" y="630.4" width="22" height="22" rx="0" fill="#000" stroke="none" stroke-width="0"/>
<circle cx="484.5" cy="641.4" r="16.2" fill="#2fa23f" stroke="none" stroke-width="0"/>
<circle cx="484.5" cy="641.4" r="11" fill="none" stroke="#86e890" stroke-width="1.4"/>
<polygon points="490.0,643.7 486.8,646.9 482.2,646.9 479.0,643.7 479.0,639.1 482.2,635.9 486.8,635.9 490.0,639.1" fill="#5a3fb0"/>
<path d="M471.5 654.4L497.5 628.4" stroke="#b8c4b8" stroke-width="7" opacity="0.85"/>
<path d="M479.5 641.4H489.5M484.5 636.4V646.4" stroke="#fff" stroke-width="1" fill="none"/>
<line x1="452.7" y1="641.4" x2="471.5" y2="641.4" stroke="#fff" stroke-width="1"/>
<line x1="462.1" y1="632.4" x2="462.1" y2="650.4" stroke="#fff" stroke-width="1"/>
<circle cx="439.7" cy="667.9" r="3.6" fill="none" stroke="#a0a0d0" stroke-width="1.6"/>
<circle cx="484.5" cy="667.9" r="3.6" fill="none" stroke="#a0a0d0" stroke-width="1.6"/>
<rect x="573.8" y="609.5" width="90.6" height="66" rx="0" fill="none" stroke="#a8a8c8" stroke-width="1.8"/>
<line x1="573.8" y1="622" x2="664.4" y2="622" stroke="#a8a8b8" stroke-width="1.5"/>
<line x1="573.8" y1="660" x2="664.4" y2="660" stroke="#a8a8b8" stroke-width="1.5"/>
<rect x="664.4" y="659.5" width="4.6" height="10.5" rx="0" fill="none" stroke="#a8a8b8" stroke-width="1.5"/>
<rect x="616.55" y="623.9" width="6.4" height="36.1" rx="0" fill="#9c9c9c" stroke="none" stroke-width="0"/>
<rect x="582.7" y="626.9" width="29" height="29" rx="0" fill="#9a9a9a" stroke="none" stroke-width="0"/>
<rect x="586.2" y="630.4" width="22" height="22" rx="0" fill="#000" stroke="none" stroke-width="0"/>
<circle cx="597.2" cy="641.4" r="16.2" fill="#2fa23f" stroke="none" stroke-width="0"/>
<circle cx="597.2" cy="641.4" r="11" fill="none" stroke="#86e890" stroke-width="1.4"/>
<polygon points="602.7,643.7 599.5,646.9 594.9,646.9 591.7,643.7 591.7,639.1 594.9,635.9 599.5,635.9 602.7,639.1" fill="#5a3fb0"/>
<path d="M584.2 654.4L610.2 628.4" stroke="#b8c4b8" stroke-width="7" opacity="0.85"/>
<path d="M592.2 641.4H602.2M597.2 636.4V646.4" stroke="#fff" stroke-width="1" fill="none"/>
<rect x="627.8" y="626.9" width="29" height="29" rx="0" fill="#9a9a9a" stroke="none" stroke-width="0"/>
<rect x="631.3" y="630.4" width="22" height="22" rx="0" fill="#000" stroke="none" stroke-width="0"/>
<circle cx="642.3" cy="641.4" r="16.2" fill="#2fa23f" stroke="none" stroke-width="0"/>
<circle cx="642.3" cy="641.4" r="11" fill="none" stroke="#86e890" stroke-width="1.4"/>
<polygon points="647.8,643.7 644.6,646.9 640.0,646.9 636.8,643.7 636.8,639.1 640.0,635.9 644.6,635.9 647.8,639.1" fill="#5a3fb0"/>
<path d="M629.3 654.4L655.3 628.4" stroke="#b8c4b8" stroke-width="7" opacity="0.85"/>
<path d="M637.3 641.4H647.3M642.3 636.4V646.4" stroke="#fff" stroke-width="1" fill="none"/>
<line x1="610.2" y1="641.4" x2="629.3" y2="641.4" stroke="#fff" stroke-width="1"/>
<line x1="619.75" y1="632.4" x2="619.75" y2="650.4" stroke="#fff" stroke-width="1"/>
<circle cx="597.2" cy="667.9" r="3.6" fill="none" stroke="#a0a0d0" stroke-width="1.6"/>
<circle cx="642.3" cy="667.9" r="3.6" fill="none" stroke="#a0a0d0" stroke-width="1.6"/>
<path d="M514.4 631.8V626.8H519.4M538.6 626.8H543.6V631.8M543.6 651V656H538.6M519.4 656H514.4V651" stroke="#a4a4a4" stroke-width="2.4" fill="none"/>
<polygon points="543.4,647.4 535.0,655.8 523.0,655.8 514.6,647.4 514.6,635.4 523.0,627.0 535.0,627.0 543.4,635.4" fill="#2fa23f"/>
<circle cx="529" cy="641.4" r="10" fill="none" stroke="#86e890" stroke-width="1.3"/>
<polygon points="534.0,643.5 531.1,646.4 526.9,646.4 524.0,643.5 524.0,639.3 526.9,636.4 531.1,636.4 534.0,639.3" fill="#2d29a2"/>
<path d="M524.5 641.4H533.5M529 636.9V645.9" stroke="#f0e8ff" stroke-width="1" fill="none"/>
<path d="M672.7 631.8V626.8H677.7M696.9 626.8H701.9V631.8M701.9 651V656H696.9M677.7 656H672.7V651" stroke="#a4a4a4" stroke-width="2.4" fill="none"/>
<polygon points="701.7,647.4 693.3,655.8 681.3,655.8 672.9,647.4 672.9,635.4 681.3,627.0 693.3,627.0 701.7,635.4" fill="#2fa23f"/>
<circle cx="687.3" cy="641.4" r="10" fill="none" stroke="#86e890" stroke-width="1.3"/>
<polygon points="692.3,643.5 689.4,646.4 685.2,646.4 682.3,643.5 682.3,639.3 685.2,636.4 689.4,636.4 692.3,639.3" fill="#2d29a2"/>
<path d="M682.8 641.4H691.8M687.3 636.9V645.9" stroke="#f0e8ff" stroke-width="1" fill="none"/>
<path d="M192 140.8V134.3H198.5M206.9 134.3H213.4V140.8M213.4 149.2V155.7H206.9M198.5 155.7H192V149.2" stroke="#a4a4a4" stroke-width="2.1" fill="none"/>
<polygon points="212.7,149.1 206.8,155.0 198.6,155.0 192.7,149.1 192.7,140.9 198.6,135.0 206.8,135.0 212.7,140.9" fill="#2fa23f"/>
<path d="M195.7 138L209.7 152M209.7 138L195.7 152" stroke="#86e890" stroke-width="0.8"/>
<polygon points="212.0,148.9 206.6,154.3 198.8,154.3 193.4,148.9 193.4,141.1 198.8,135.7 206.6,135.7 212.0,141.1" fill="none" stroke="#86e890" stroke-width="1.1" opacity="0.8"/>
<polygon points="198.5,145 202.7,140.8 206.9,145 202.7,149.2" fill="#e4e4ec"/>
<circle cx="202.7" cy="145" r="2.2" fill="none" stroke="#555" stroke-width="0.9"/>
<circle cx="202.7" cy="145" r="1.1" fill="#f8e8f8" stroke="none" stroke-width="0"/>
<path d="M198.7 145H206.7M202.7 141V149" stroke="#fff" stroke-width="0.8" fill="none"/>
<path d="M710.3 140.8V134.3H716.8M725.2 134.3H731.7V140.8M731.7 149.2V155.7H725.2M716.8 155.7H710.3V149.2" stroke="#a4a4a4" stroke-width="2.1" fill="none"/>
<polygon points="731.0,149.1 725.1,155.0 716.9,155.0 711.0,149.1 711.0,140.9 716.9,135.0 725.1,135.0 731.0,140.9" fill="#2fa23f"/>
<path d="M714 138L728 152M728 138L714 152" stroke="#86e890" stroke-width="0.8"/>
<polygon points="730.3,148.9 724.9,154.3 717.1,154.3 711.7,148.9 711.7,141.1 717.1,135.7 724.9,135.7 730.3,141.1" fill="none" stroke="#86e890" stroke-width="1.1" opacity="0.8"/>
<polygon points="716.8,145 721,140.8 725.2,145 721,149.2" fill="#e4e4ec"/>
<circle cx="721" cy="145" r="2.2" fill="none" stroke="#555" stroke-width="0.9"/>
<circle cx="721" cy="145" r="1.1" fill="#f8e8f8" stroke="none" stroke-width="0"/>
<path d="M717 145H725M721 141V149" stroke="#fff" stroke-width="0.8" fill="none"/>
<path d="M192.3 637V630.5H198.8M207.2 630.5H213.7V637M213.7 645.4V651.9H207.2M198.8 651.9H192.3V645.4" stroke="#a4a4a4" stroke-width="2.1" fill="none"/>
<polygon points="213.0,645.3 207.1,651.2 198.9,651.2 193.0,645.3 193.0,637.1 198.9,631.2 207.1,631.2 213.0,637.1" fill="#2fa23f"/>
<path d="M196 634.2L210 648.2M210 634.2L196 648.2" stroke="#86e890" stroke-width="0.8"/>
<polygon points="212.3,645.1 206.9,650.5 199.1,650.5 193.7,645.1 193.7,637.3 199.1,631.9 206.9,631.9 212.3,637.3" fill="none" stroke="#86e890" stroke-width="1.1" opacity="0.8"/>
<polygon points="198.8,641.2 203,637 207.2,641.2 203,645.4" fill="#e4e4ec"/>
<circle cx="203" cy="641.2" r="2.2" fill="none" stroke="#555" stroke-width="0.9"/>
<circle cx="203" cy="641.2" r="1.1" fill="#f8e8f8" stroke="none" stroke-width="0"/>
<path d="M199 641.2H207M203 637.2V645.2" stroke="#fff" stroke-width="0.8" fill="none"/>
<path d="M709.6 637V630.5H716.1M724.5 630.5H731V637M731 645.4V651.9H724.5M716.1 651.9H709.6V645.4" stroke="#a4a4a4" stroke-width="2.1" fill="none"/>
<polygon points="730.3,645.3 724.4,651.2 716.2,651.2 710.3,645.3 710.3,637.1 716.2,631.2 724.4,631.2 730.3,637.1" fill="#2fa23f"/>
<path d="M713.3 634.2L727.3 648.2M727.3 634.2L713.3 648.2" stroke="#86e890" stroke-width="0.8"/>
<polygon points="729.6,645.1 724.2,650.5 716.4,650.5 711.0,645.1 711.0,637.3 716.4,631.9 724.2,631.9 729.6,637.3" fill="none" stroke="#86e890" stroke-width="1.1" opacity="0.8"/>
<polygon points="716.1,641.2 720.3,637 724.5,641.2 720.3,645.4" fill="#e4e4ec"/>
<circle cx="720.3" cy="641.2" r="2.2" fill="none" stroke="#555" stroke-width="0.9"/>
<circle cx="720.3" cy="641.2" r="1.1" fill="#f8e8f8" stroke="none" stroke-width="0"/>
<path d="M716.3 641.2H724.3M720.3 637.2V645.2" stroke="#fff" stroke-width="0.8" fill="none"/>
<path d="M936.3 140.8V134.3H942.8M951.2 134.3H957.7V140.8M957.7 149.2V155.7H951.2M942.8 155.7H936.3V149.2" stroke="#a4a4a4" stroke-width="2.1" fill="none"/>
<polygon points="957.0,149.1 951.1,155.0 942.9,155.0 937.0,149.1 937.0,140.9 942.9,135.0 951.1,135.0 957.0,140.9" fill="#2fa23f"/>
<path d="M940 138L954 152M954 138L940 152" stroke="#86e890" stroke-width="0.8"/>
<polygon points="956.3,148.9 950.9,154.3 943.1,154.3 937.7,148.9 937.7,141.1 943.1,135.7 950.9,135.7 956.3,141.1" fill="none" stroke="#86e890" stroke-width="1.1" opacity="0.8"/>
<polygon points="942.8,145 947,140.8 951.2,145 947,149.2" fill="#e4e4ec"/>
<circle cx="947" cy="145" r="2.2" fill="none" stroke="#555" stroke-width="0.9"/>
<circle cx="947" cy="145" r="1.1" fill="#f8e8f8" stroke="none" stroke-width="0"/>
<path d="M943 145H951M947 141V149" stroke="#fff" stroke-width="0.8" fill="none"/>
<path d="M936.3 637.1V630.6H942.8M951.2 630.6H957.7V637.1M957.7 645.5V652H951.2M942.8 652H936.3V645.5" stroke="#a4a4a4" stroke-width="2.1" fill="none"/>
<polygon points="957.0,645.4 951.1,651.3 942.9,651.3 937.0,645.4 937.0,637.2 942.9,631.3 951.1,631.3 957.0,637.2" fill="#2fa23f"/>
<path d="M940 634.3L954 648.3M954 634.3L940 648.3" stroke="#86e890" stroke-width="0.8"/>
<polygon points="956.3,645.2 950.9,650.6 943.1,650.6 937.7,645.2 937.7,637.4 943.1,632.0 950.9,632.0 956.3,637.4" fill="none" stroke="#86e890" stroke-width="1.1" opacity="0.8"/>
<polygon points="942.8,641.3 947,637.1 951.2,641.3 947,645.5" fill="#e4e4ec"/>
<circle cx="947" cy="641.3" r="2.2" fill="none" stroke="#555" stroke-width="0.9"/>
<circle cx="947" cy="641.3" r="1.1" fill="#f8e8f8" stroke="none" stroke-width="0"/>
<path d="M943 641.3H951M947 637.3V645.3" stroke="#fff" stroke-width="0.8" fill="none"/>
<path d="M186.5 168.7 L180.0 168.7 L180.0 158.7 L186.5 158.7M180.0 163.7 L184.9 163.7M195.4 160.4 L193.7 159.4 L190.5 159.4 L188.8 160.7 L188.8 162.2 L190.5 163.5 L193.7 163.9 L195.4 165.2 L195.4 166.7 L193.7 168.0 L190.5 168.0 L188.8 167.0M192.1 157.4 L192.1 170.0M199.0 161.1 L201.6 158.7 L201.6 168.7M206.5 167.0 L208.1 168.7 L211.4 168.7 L213.0 167.0 L213.0 160.4 L211.4 158.7 L208.1 158.7 L206.5 160.4 L206.5 162.9 L208.1 164.4 L213.0 164.4" stroke="#a4a4a4" stroke-width="1.15" fill="none" stroke-linejoin="round" stroke-linecap="round"/>
<path d="M705.3 168.7 L699.0 168.7 L699.0 158.7 L705.3 158.7M699.0 163.7 L703.7 163.7M713.9 160.4 L712.3 159.4 L709.1 159.4 L707.6 160.7 L707.6 162.2 L709.1 163.5 L712.3 163.9 L713.9 165.2 L713.9 166.7 L712.3 168.0 L709.1 168.0 L707.6 167.0M710.7 157.4 L710.7 170.0M716.1 160.4 L717.7 158.7 L720.9 158.7 L722.4 160.4 L722.4 162.1 L716.1 168.7 L722.4 168.7M726.3 168.7 L729.4 168.7 L731.0 167.0 L731.0 160.4 L729.4 158.7 L726.3 158.7 L724.7 160.4 L724.7 167.0 L726.3 168.7" stroke="#a4a4a4" stroke-width="1.15" fill="none" stroke-linejoin="round" stroke-linecap="round"/>
<path d="M186.9 663.7 L180.5 663.7 L180.5 653.7 L186.9 653.7M180.5 658.7 L185.3 658.7M195.6 655.4 L194.0 654.4 L190.8 654.4 L189.2 655.7 L189.2 657.2 L190.8 658.5 L194.0 658.9 L195.6 660.2 L195.6 661.7 L194.0 663.0 L190.8 663.0 L189.2 662.0M192.4 652.4 L192.4 665.0M199.2 656.1 L201.7 653.7 L201.7 663.7M208.2 658.5 L206.6 657.0 L206.6 655.4 L208.2 653.7 L211.4 653.7 L213.0 655.4 L213.0 657.0 L211.4 658.5 L208.2 658.5 L206.6 660.2 L206.6 662.0 L208.2 663.7 L211.4 663.7 L213.0 662.0 L213.0 660.2 L211.4 658.5" stroke="#a4a4a4" stroke-width="1.15" fill="none" stroke-linejoin="round" stroke-linecap="round"/>
<path d="M923.0 168.7 L916.5 168.7 L916.5 158.7 L923.0 158.7M916.5 163.7 L921.4 163.7M931.9 160.4 L930.2 159.4 L927.0 159.4 L925.3 160.7 L925.3 162.2 L927.0 163.5 L930.2 163.9 L931.9 165.2 L931.9 166.7 L930.2 168.0 L927.0 168.0 L925.3 167.0M928.6 157.4 L928.6 170.0M935.5 161.1 L938.1 158.7 L938.1 168.7M943.0 160.4 L944.6 158.7 L947.9 158.7 L949.5 160.4 L949.5 162.1 L943.0 168.7 L949.5 168.7" stroke="#a4a4a4" stroke-width="1.15" fill="none" stroke-linejoin="round" stroke-linecap="round"/>
<path d="M923.0 663.7 L916.5 663.7 L916.5 653.7 L923.0 653.7M916.5 658.7 L921.4 658.7M931.9 655.4 L930.2 654.4 L927.0 654.4 L925.3 655.7 L925.3 657.2 L927.0 658.5 L930.2 658.9 L931.9 660.2 L931.9 661.7 L930.2 663.0 L927.0 663.0 L925.3 662.0M928.6 652.4 L928.6 665.0M935.5 656.1 L938.1 653.7 L938.1 663.7M943.0 655.4 L944.6 653.7 L947.9 653.7 L949.5 655.4 L949.5 657.0 L943.0 663.7 L949.5 663.7" stroke="#a4a4a4" stroke-width="1.15" fill="none" stroke-linejoin="round" stroke-linecap="round"/>
<path d="M223.0 673.0 L223.0 659.3 L234.5 673.0 L234.5 659.3M250.0 661.6 L247.1 659.3 L241.4 659.3 L238.5 661.6 L238.5 670.7 L241.4 673.0 L247.1 673.0 L250.0 670.7 L250.0 666.2 L244.8 666.2M254.0 659.3 L254.0 670.7 L256.9 673.0 L262.6 673.0 L265.5 670.7 L265.5 659.3M272.4 673.0 L278.1 673.0 L281.0 670.7 L281.0 661.6 L278.1 659.3 L272.4 659.3 L269.5 661.6 L269.5 670.7 L272.4 673.0M285.0 673.0 L285.0 659.3 L296.5 673.0 L296.5 659.3M302.8 662.5 L307.4 659.3 L307.4 673.0" stroke="#a8a8a8" stroke-width="1.5" fill="none" stroke-linejoin="round" stroke-linecap="round"/>
<path d="M415.0 694.7 L415.0 681.0 L426.9 694.7 L426.9 681.0M442.9 683.3 L439.9 681.0 L434.0 681.0 L431.0 683.3 L431.0 692.4 L434.0 694.7 L439.9 694.7 L442.9 692.4 L442.9 687.9 L437.6 687.9M447.1 681.0 L447.1 692.4 L450.0 694.7 L456.0 694.7 L458.9 692.4 L458.9 681.0M466.0 694.7 L472.0 694.7 L474.9 692.4 L474.9 683.3 L472.0 681.0 L466.0 681.0 L463.1 683.3 L463.1 692.4 L466.0 694.7M479.1 694.7 L479.1 681.0 L491.0 694.7 L491.0 681.0M495.1 683.3 L498.1 681.0 L504.0 681.0 L507.0 683.3 L507.0 685.6 L495.1 694.7 L507.0 694.7" stroke="#a8a8a8" stroke-width="1.5" fill="none" stroke-linejoin="round" stroke-linecap="round"/>
<path d="M572.0 694.7 L572.0 681.0 L583.9 694.7 L583.9 681.0M599.9 683.3 L596.9 681.0 L591.0 681.0 L588.0 683.3 L588.0 692.4 L591.0 694.7 L596.9 694.7 L599.9 692.4 L599.9 687.9 L594.6 687.9M604.1 681.0 L604.1 692.4 L607.0 694.7 L613.0 694.7 L615.9 692.4 L615.9 681.0M623.0 694.7 L629.0 694.7 L631.9 692.4 L631.9 683.3 L629.0 681.0 L623.0 681.0 L620.1 683.3 L620.1 692.4 L623.0 694.7M636.1 694.7 L636.1 681.0 L648.0 694.7 L648.0 681.0M652.1 683.3 L655.1 681.0 L661.0 681.0 L664.0 683.3 L664.0 685.6 L661.0 687.6 L656.6 687.6M661.0 687.6 L664.0 689.7 L664.0 692.4 L661.0 694.7 L655.1 694.7 L652.1 692.4" stroke="#a8a8a8" stroke-width="1.5" fill="none" stroke-linejoin="round" stroke-linecap="round"/>
<path d="M244.3 338.9 L238.0 338.9 L238.0 328.9 L244.3 328.9M238.0 333.9 L242.7 333.9M252.9 330.6 L251.3 329.6 L248.1 329.6 L246.6 330.9 L246.6 332.4 L248.1 333.7 L251.3 334.1 L252.9 335.4 L252.9 336.9 L251.3 338.2 L248.1 338.2 L246.6 337.2M249.7 327.6 L249.7 340.2M255.1 337.2 L256.7 338.9 L259.9 338.9 L261.4 337.2 L261.4 330.6 L259.9 328.9 L256.7 328.9 L255.1 330.6 L255.1 333.1 L256.7 334.6 L261.4 334.6M263.7 337.2 L265.3 338.9 L268.4 338.9 L270.0 337.2 L270.0 330.6 L268.4 328.9 L265.3 328.9 L263.7 330.6 L263.7 333.1 L265.3 334.6 L270.0 334.6" stroke="#a4a4a4" stroke-width="1.15" fill="none" stroke-linejoin="round" stroke-linecap="round"/>
<path d="M299.8 394.6 L293.9 394.6 L293.9 384.6 L299.8 384.6M293.9 389.6 L298.3 389.6M307.8 386.3 L306.4 385.3 L303.4 385.3 L301.9 386.6 L301.9 388.1 L303.4 389.4 L306.4 389.8 L307.8 391.1 L307.8 392.6 L306.4 393.9 L303.4 393.9 L301.9 392.9M304.9 383.3 L304.9 395.9M311.1 387.0 L313.5 384.6 L313.5 394.6M319.4 394.6 L322.4 394.6 L323.9 392.9 L323.9 386.3 L322.4 384.6 L319.4 384.6 L318.0 386.3 L318.0 392.9 L319.4 394.6M327.2 387.0 L329.5 384.6 L329.5 394.6" stroke="#a4a4a4" stroke-width="1.15" fill="none" stroke-linejoin="round" stroke-linecap="round"/>
<path d="M343.4 348.4 L337.0 348.4 L337.0 338.4 L343.4 338.4M337.0 343.4 L341.8 343.4M352.1 340.1 L350.5 339.1 L347.3 339.1 L345.7 340.4 L345.7 341.9 L347.3 343.2 L350.5 343.6 L352.1 344.9 L352.1 346.4 L350.5 347.7 L347.3 347.7 L345.7 346.7M348.9 337.1 L348.9 349.7M354.4 346.7 L356.0 348.4 L359.2 348.4 L360.8 346.7 L360.8 340.1 L359.2 338.4 L356.0 338.4 L354.4 340.1 L354.4 342.6 L356.0 344.1 L360.8 344.1M363.1 340.1 L364.7 338.4 L367.9 338.4 L369.5 340.1 L369.5 341.8 L363.1 348.4 L369.5 348.4" stroke="#a4a4a4" stroke-width="1.15" fill="none" stroke-linejoin="round" stroke-linecap="round"/>
<path d="M344.2 258.4 L337.0 258.4 L337.0 248.4 L344.2 248.4M337.0 253.4 L342.4 253.4M354.0 250.1 L352.2 249.1 L348.6 249.1 L346.8 250.4 L346.8 251.9 L348.6 253.2 L352.2 253.6 L354.0 254.9 L354.0 256.4 L352.2 257.7 L348.6 257.7 L346.8 256.7M350.4 247.1 L350.4 259.7" stroke="#a4a4a4" stroke-width="1.15" fill="none" stroke-linejoin="round" stroke-linecap="round"/>
<path d="M344.2 281.1 L337.0 281.1 L337.0 271.1 L344.2 271.1M337.0 276.1 L342.4 276.1M354.0 272.8 L352.2 271.8 L348.6 271.8 L346.8 273.1 L346.8 274.6 L348.6 275.9 L352.2 276.3 L354.0 277.6 L354.0 279.1 L352.2 280.4 L348.6 280.4 L346.8 279.4M350.4 269.8 L350.4 282.4" stroke="#a4a4a4" stroke-width="1.15" fill="none" stroke-linejoin="round" stroke-linecap="round"/>
<path d="M344.2 303.0 L337.0 303.0 L337.0 293.0 L344.2 293.0M337.0 298.0 L342.4 298.0M354.0 294.7 L352.2 293.7 L348.6 293.7 L346.8 295.0 L346.8 296.5 L348.6 297.8 L352.2 298.2 L354.0 299.5 L354.0 301.0 L352.2 302.3 L348.6 302.3 L346.8 301.3M350.4 291.7 L350.4 304.3" stroke="#a4a4a4" stroke-width="1.15" fill="none" stroke-linejoin="round" stroke-linecap="round"/>
<path d="M344.2 324.9 L337.0 324.9 L337.0 314.9 L344.2 314.9M337.0 319.9 L342.4 319.9M354.0 316.6 L352.2 315.6 L348.6 315.6 L346.8 316.9 L346.8 318.4 L348.6 319.7 L352.2 320.1 L354.0 321.4 L354.0 322.9 L352.2 324.2 L348.6 324.2 L346.8 323.2M350.4 313.6 L350.4 326.2" stroke="#a4a4a4" stroke-width="1.15" fill="none" stroke-linejoin="round" stroke-linecap="round"/>
<path d="M221.0 306.6 L219.6 305.1 L216.9 305.1 L215.5 306.6 L215.5 312.8 L216.9 314.4 L219.6 314.4 L221.0 312.8M224.1 307.3 L226.3 305.1 L226.3 314.4" stroke="#a4a4a4" stroke-width="1.15" fill="none" stroke-linejoin="round" stroke-linecap="round" transform="rotate(-90 215 315)"/>
<path d="M237.7 301.3 L240.1 299.1 L240.1 308.4M246.0 308.4 L249.0 308.4 L250.5 306.8 L250.5 300.6 L249.0 299.1 L246.0 299.1 L244.5 300.6 L244.5 306.8 L246.0 308.4M252.6 300.6 L254.0 299.1 L257.0 299.1 L258.5 300.6 L258.5 302.2 L252.6 308.4 L258.5 308.4" stroke="#a4a4a4" stroke-width="1.15" fill="none" stroke-linejoin="round" stroke-linecap="round" transform="rotate(-90 236 309)"/>
<path d="M202 298.5H212M207 293.5V303.5" stroke="#ccc" stroke-width="1.2" fill="none"/>
<path d="M219.7 288H229.7M224.7 283V293" stroke="#ccc" stroke-width="1.2" fill="none"/>
<path d="M309.5 292.4 L309.5 283.1 L314.4 283.1 L316.0 284.6 L316.0 286.2 L314.4 287.7 L309.5 287.7M318.3 283.1 L324.7 283.1M321.5 283.1 L321.5 292.4M328.3 285.3 L330.9 283.1 L330.9 292.4" stroke="#a4a4a4" stroke-width="1.15" fill="none" stroke-linejoin="round" stroke-linecap="round" transform="rotate(-90 309 293)"/>
<path d="M296 291H312M304 283V299" stroke="#ddd" stroke-width="1.2" fill="none"/>
<path d="M296.5 265H303.5M300 261.5V268.5" stroke="#ccc" stroke-width="1" fill="none"/>
<path d="M349.5 426.6 L347.8 425.1 L344.3 425.1 L342.5 426.6 L342.5 432.8 L344.3 434.4 L347.8 434.4 L349.5 432.8M353.4 427.3 L356.2 425.1 L356.2 434.4M363.2 429.6 L361.5 428.2 L361.5 426.6 L363.2 425.1 L366.8 425.1 L368.5 426.6 L368.5 428.2 L366.8 429.6 L363.2 429.6 L361.5 431.1 L361.5 432.8 L363.2 434.4 L366.8 434.4 L368.5 432.8 L368.5 431.1 L366.8 429.6M372.4 427.3 L375.2 425.1 L375.2 434.4M387.5 425.1 L380.5 425.1 L380.5 429.0 L385.7 429.0 L387.5 430.4 L387.5 432.8 L385.7 434.4 L382.2 434.4 L380.5 432.8" stroke="#a4a4a4" stroke-width="1.15" fill="none" stroke-linejoin="round" stroke-linecap="round" transform="rotate(-90 342 435)"/>
<path d="M289.6 437.4 L285.0 437.4 L285.0 428.1 L289.6 428.1M285.0 432.7 L288.4 432.7M295.8 429.6 L294.6 428.7 L292.4 428.7 L291.2 430.0 L291.2 431.3 L292.4 432.6 L294.6 432.9 L295.8 434.1 L295.8 435.5 L294.6 436.8 L292.4 436.8 L291.2 435.8M293.5 426.8 L293.5 438.6M298.3 430.3 L300.2 428.1 L300.2 437.4" stroke="#a4a4a4" stroke-width="1.15" fill="none" stroke-linejoin="round" stroke-linecap="round" transform="rotate(-90 284.5 438)"/>
<path d="M243.0 461.6 L249.8 461.6M246.4 461.6 L246.4 470.9M252.2 463.1 L253.9 461.6 L257.3 461.6 L259.0 463.1 L259.0 464.7 L252.2 470.9 L259.0 470.9" stroke="#a4a4a4" stroke-width="1.15" fill="none" stroke-linejoin="round" stroke-linecap="round" transform="rotate(-90 242.5 471.5)"/>
<path d="M242 472H250M246 468V476" stroke="#ccc" stroke-width="1.2" fill="none"/>
<path d="M297.8 503.4 L297.8 513.4 L305.0 513.4M314.8 513.4 L307.6 513.4 L307.6 503.4 L314.8 503.4M307.6 508.4 L313.0 508.4M317.3 513.4 L317.3 503.4 L322.4 503.4 L324.5 505.4 L324.5 511.4 L322.4 513.4 L317.3 513.4M328.9 508.2 L327.1 506.8 L327.1 505.1 L328.9 503.4 L332.5 503.4 L334.3 505.1 L334.3 506.8 L332.5 508.2 L328.9 508.2 L327.1 509.9 L327.1 511.7 L328.9 513.4 L332.5 513.4 L334.3 511.7 L334.3 509.9 L332.5 508.2M338.3 505.8 L341.2 503.4 L341.2 513.4M348.4 508.2 L346.6 506.8 L346.6 505.1 L348.4 503.4 L352.0 503.4 L353.8 505.1 L353.8 506.8 L352.0 508.2 L348.4 508.2 L346.6 509.9 L346.6 511.7 L348.4 513.4 L352.0 513.4 L353.8 511.7 L353.8 509.9 L352.0 508.2" stroke="#a4a4a4" stroke-width="1.15" fill="none" stroke-linejoin="round" stroke-linecap="round" transform="rotate(-90 297.3 514)"/>
<path d="M332.2 483.6 L330.2 482.1 L326.4 482.1 L324.5 483.6 L324.5 489.8 L326.4 491.4 L330.2 491.4 L332.2 489.8M334.8 483.6 L336.8 482.1 L340.6 482.1 L342.5 483.6 L342.5 485.2 L340.6 486.6 L337.7 486.6M340.6 486.6 L342.5 488.0 L342.5 489.8 L340.6 491.4 L336.8 491.4 L334.8 489.8" stroke="#a4a4a4" stroke-width="1.15" fill="none" stroke-linejoin="round" stroke-linecap="round" transform="rotate(-90 324 492)"/>
<path d="M325 497H333M329 493V501" stroke="#ccc" stroke-width="1.2" fill="none"/>
<path d="M392.0 496.4 L392.0 487.1 L386.5 493.3 L393.8 493.3M396.4 487.1 L403.6 487.1 L399.1 496.4M406.2 490.2 L406.2 494.8 L408.0 496.4 L411.7 496.4 L413.5 494.8M413.5 490.2 L413.5 496.4" stroke="#a4a4a4" stroke-width="1.15" fill="none" stroke-linejoin="round" stroke-linecap="round" transform="rotate(-90 386 497)"/>
<path d="M379.5 469H386.5M383 465.5V472.5" stroke="#ccc" stroke-width="1.2" fill="none"/>
<path d="M401.6 615.0 L401.6 605.7 L396.5 611.9 L403.3 611.9M405.6 605.7 L412.4 605.7 L408.2 615.0M414.7 608.8 L414.7 613.4 L416.4 615.0 L419.8 615.0 L421.5 613.4M421.5 608.8 L421.5 615.0" stroke="#a4a4a4" stroke-width="1.15" fill="none" stroke-linejoin="round" stroke-linecap="round" transform="rotate(-90 396 615.6)"/>
<path d="M393 615.6H401M397 611.6V619.6" stroke="#ccc" stroke-width="1.2" fill="none"/>
<path d="M332.7 605.6 L330.9 604.1 L327.3 604.1 L325.5 605.6 L325.5 611.8 L327.3 613.4 L330.9 613.4 L332.7 611.8M335.3 605.6 L337.1 604.1 L340.7 604.1 L342.5 605.6 L342.5 607.2 L335.3 613.4 L342.5 613.4" stroke="#a4a4a4" stroke-width="1.15" fill="none" stroke-linejoin="round" stroke-linecap="round" transform="rotate(-90 325 614)"/>
<path d="M320 616H328M324 612V620" stroke="#ccc" stroke-width="1.2" fill="none"/>
<path d="M254.4 507.7 L248.0 507.7 L248.0 497.7 L254.4 497.7M248.0 502.7 L252.8 502.7M263.1 499.4 L261.5 498.4 L258.3 498.4 L256.7 499.7 L256.7 501.2 L258.3 502.5 L261.5 502.9 L263.1 504.2 L263.1 505.7 L261.5 507.0 L258.3 507.0 L256.7 506.0M259.9 496.4 L259.9 509.0M265.4 506.0 L267.0 507.7 L270.2 507.7 L271.8 506.0 L271.8 499.4 L270.2 497.7 L267.0 497.7 L265.4 499.4 L265.4 501.9 L267.0 503.4 L271.8 503.4M275.7 502.5 L274.1 501.1 L274.1 499.4 L275.7 497.7 L278.9 497.7 L280.5 499.4 L280.5 501.1 L278.9 502.5 L275.7 502.5 L274.1 504.2 L274.1 506.0 L275.7 507.7 L278.9 507.7 L280.5 506.0 L280.5 504.2 L278.9 502.5" stroke="#a4a4a4" stroke-width="1.15" fill="none" stroke-linejoin="round" stroke-linecap="round"/>
<path d="M254.4 541.7 L248.0 541.7 L248.0 531.7 L254.4 531.7M248.0 536.7 L252.8 536.7M263.1 533.4 L261.5 532.4 L258.3 532.4 L256.7 533.7 L256.7 535.2 L258.3 536.5 L261.5 536.9 L263.1 538.2 L263.1 539.7 L261.5 541.0 L258.3 541.0 L256.7 540.0M259.9 530.4 L259.9 543.0M265.4 540.0 L267.0 541.7 L270.2 541.7 L271.8 540.0 L271.8 533.4 L270.2 531.7 L267.0 531.7 L265.4 533.4 L265.4 535.9 L267.0 537.4 L271.8 537.4M274.1 531.7 L280.5 531.7 L276.5 541.7" stroke="#a4a4a4" stroke-width="1.15" fill="none" stroke-linejoin="round" stroke-linecap="round"/>
<path d="M387 411 V432.5 M384.5 416 H392 M387 419.6 H397.5 M387 428.6 H397.5" stroke="#ddd" stroke-width="1.1" fill="none"/>
<path d="M477.8 196.4 L471.5 196.4 L471.5 186.4 L477.8 186.4M471.5 191.4 L476.2 191.4M486.4 188.1 L484.8 187.1 L481.6 187.1 L480.1 188.4 L480.1 189.9 L481.6 191.2 L484.8 191.6 L486.4 192.9 L486.4 194.4 L484.8 195.7 L481.6 195.7 L480.1 194.7M483.2 185.1 L483.2 197.7M494.9 188.1 L493.4 186.4 L490.2 186.4 L488.6 188.1 L488.6 194.7 L490.2 196.4 L493.4 196.4 L494.9 194.7 L494.9 192.2 L493.4 190.7 L488.6 190.7M497.2 186.4 L503.5 186.4 L499.5 196.4" stroke="#a4a4a4" stroke-width="1.15" fill="none" stroke-linejoin="round" stroke-linecap="round" transform="rotate(-90 471 197)"/>
<path d="M478.0 330.4 L471.5 330.4 L471.5 320.4 L478.0 320.4M471.5 325.4 L476.4 325.4M486.9 322.1 L485.2 321.1 L482.0 321.1 L480.3 322.4 L480.3 323.9 L482.0 325.2 L485.2 325.6 L486.9 326.9 L486.9 328.4 L485.2 329.7 L482.0 329.7 L480.3 328.7M483.6 319.1 L483.6 331.7M495.7 322.1 L494.0 320.4 L490.8 320.4 L489.1 322.1 L489.1 328.7 L490.8 330.4 L494.0 330.4 L495.7 328.7 L495.7 326.2 L494.0 324.7 L489.1 324.7M504.5 322.1 L502.9 320.4 L499.6 320.4 L498.0 322.1 L498.0 328.7 L499.6 330.4 L502.9 330.4 L504.5 328.7 L504.5 326.2 L502.9 324.7 L498.0 324.7" stroke="#a4a4a4" stroke-width="1.15" fill="none" stroke-linejoin="round" stroke-linecap="round" transform="rotate(-90 471 331)"/>
<path d="M411.7 270.4 L404.5 270.4 L404.5 260.4 L411.7 260.4M404.5 265.4 L409.9 265.4M421.5 262.1 L419.7 261.1 L416.1 261.1 L414.3 262.4 L414.3 263.9 L416.1 265.2 L419.7 265.6 L421.5 266.9 L421.5 268.4 L419.7 269.7 L416.1 269.7 L414.3 268.7M417.9 259.1 L417.9 271.7" stroke="#a4a4a4" stroke-width="1.15" fill="none" stroke-linejoin="round" stroke-linecap="round"/>
<path d="M412.0 293.4 L405.5 293.4 L405.5 283.4 L412.0 283.4M405.5 288.4 L410.4 288.4M420.7 285.1 L419.1 284.1 L415.9 284.1 L414.3 285.4 L414.3 286.9 L415.9 288.2 L419.1 288.6 L420.7 289.9 L420.7 291.4 L419.1 292.7 L415.9 292.7 L414.3 291.7M417.5 282.1 L417.5 294.7M423.0 285.1 L424.6 283.4 L427.9 283.4 L429.5 285.1 L429.5 286.8 L423.0 293.4 L429.5 293.4" stroke="#a4a4a4" stroke-width="1.15" fill="none" stroke-linejoin="round" stroke-linecap="round"/>
<path d="M434.4 293.4 L428.5 293.4 L428.5 283.4 L434.4 283.4M428.5 288.4 L433.0 288.4M442.5 285.1 L441.0 284.1 L438.0 284.1 L436.5 285.4 L436.5 286.9 L438.0 288.2 L441.0 288.6 L442.5 289.9 L442.5 291.4 L441.0 292.7 L438.0 292.7 L436.5 291.7M439.5 282.1 L439.5 294.7M450.5 285.1 L449.0 283.4 L446.0 283.4 L444.5 285.1 L444.5 291.7 L446.0 293.4 L449.0 293.4 L450.5 291.7 L450.5 289.2 L449.0 287.7 L444.5 287.7M454.0 288.2 L452.6 286.8 L452.6 285.1 L454.0 283.4 L457.0 283.4 L458.5 285.1 L458.5 286.8 L457.0 288.2 L454.0 288.2 L452.6 289.9 L452.6 291.7 L454.0 293.4 L457.0 293.4 L458.5 291.7 L458.5 289.9 L457.0 288.2" stroke="#a4a4a4" stroke-width="1.15" fill="none" stroke-linejoin="round" stroke-linecap="round"/>
<path d="M536.5 158.7 L530.2 158.7 L530.2 148.7 L536.5 148.7M530.2 153.7 L534.9 153.7M545.1 150.4 L543.5 149.4 L540.3 149.4 L538.8 150.7 L538.8 152.2 L540.3 153.5 L543.5 153.9 L545.1 155.2 L545.1 156.7 L543.5 158.0 L540.3 158.0 L538.8 157.0M541.9 147.4 L541.9 160.0M553.6 148.7 L547.3 148.7 L547.3 152.9 L552.1 152.9 L553.6 154.4 L553.6 157.0 L552.1 158.7 L548.9 158.7 L547.3 157.0M562.2 148.7 L555.9 148.7 L555.9 152.9 L560.6 152.9 L562.2 154.4 L562.2 157.0 L560.6 158.7 L557.5 158.7 L555.9 157.0" stroke="#c0b0b0" stroke-width="1.15" fill="none" stroke-linejoin="round" stroke-linecap="round"/>
<path d="M604.8 173.4 L598.5 173.4 L598.5 163.4 L604.8 163.4M598.5 168.4 L603.2 168.4M613.4 165.1 L611.8 164.1 L608.6 164.1 L607.1 165.4 L607.1 166.9 L608.6 168.2 L611.8 168.6 L613.4 169.9 L613.4 171.4 L611.8 172.7 L608.6 172.7 L607.1 171.7M610.2 162.1 L610.2 174.7M621.9 165.1 L620.4 163.4 L617.2 163.4 L615.6 165.1 L615.6 171.7 L617.2 173.4 L620.4 173.4 L621.9 171.7 L621.9 169.2 L620.4 167.7 L615.6 167.7M625.8 173.4 L628.9 173.4 L630.5 171.7 L630.5 165.1 L628.9 163.4 L625.8 163.4 L624.2 165.1 L624.2 171.7 L625.8 173.4" stroke="#a4a4a4" stroke-width="1.15" fill="none" stroke-linejoin="round" stroke-linecap="round" transform="rotate(-90 598 174)"/>
<path d="M637.8 169.4 L631.5 169.4 L631.5 159.4 L637.8 159.4M631.5 164.4 L636.2 164.4M646.4 161.1 L644.8 160.1 L641.6 160.1 L640.1 161.4 L640.1 162.9 L641.6 164.2 L644.8 164.6 L646.4 165.9 L646.4 167.4 L644.8 168.7 L641.6 168.7 L640.1 167.7M643.2 158.1 L643.2 170.7M654.9 161.1 L653.4 159.4 L650.2 159.4 L648.6 161.1 L648.6 167.7 L650.2 169.4 L653.4 169.4 L654.9 167.7 L654.9 165.2 L653.4 163.7 L648.6 163.7M657.2 161.1 L658.8 159.4 L661.9 159.4 L663.5 161.1 L663.5 162.8 L661.9 164.2 L659.5 164.2M661.9 164.2 L663.5 165.7 L663.5 167.7 L661.9 169.4 L658.8 169.4 L657.2 167.7" stroke="#a4a4a4" stroke-width="1.15" fill="none" stroke-linejoin="round" stroke-linecap="round"/>
<path d="M709.2 165.9 L703.0 165.9 L703.0 155.9 L709.2 155.9M703.0 160.9 L707.7 160.9M717.7 157.6 L716.1 156.6 L713.0 156.6 L711.4 157.9 L711.4 159.4 L713.0 160.7 L716.1 161.1 L717.7 162.4 L717.7 163.9 L716.1 165.2 L713.0 165.2 L711.4 164.2M714.5 154.6 L714.5 167.2M726.1 155.9 L719.8 155.9 L719.8 160.1 L724.5 160.1 L726.1 161.6 L726.1 164.2 L724.5 165.9 L721.4 165.9 L719.8 164.2M728.3 157.6 L729.8 155.9 L732.9 155.9 L734.5 157.6 L734.5 159.2 L732.9 160.7 L730.6 160.7M732.9 160.7 L734.5 162.2 L734.5 164.2 L732.9 165.9 L729.8 165.9 L728.3 164.2" stroke="#a4a4a4" stroke-width="1.15" fill="none" stroke-linejoin="round" stroke-linecap="round" transform="rotate(-90 702.5 166.5)"/>
<path d="M652.3 240.9 L646.0 240.9 L646.0 230.9 L652.3 230.9M646.0 235.9 L650.7 235.9M660.9 232.6 L659.3 231.6 L656.1 231.6 L654.6 232.9 L654.6 234.4 L656.1 235.7 L659.3 236.1 L660.9 237.4 L660.9 238.9 L659.3 240.2 L656.1 240.2 L654.6 239.2M657.7 229.6 L657.7 242.2M669.4 230.9 L663.1 230.9 L663.1 235.1 L667.9 235.1 L669.4 236.6 L669.4 239.2 L667.9 240.9 L664.7 240.9 L663.1 239.2M671.7 232.6 L673.3 230.9 L676.4 230.9 L678.0 232.6 L678.0 234.2 L671.7 240.9 L678.0 240.9" stroke="#a4a4a4" stroke-width="1.15" fill="none" stroke-linejoin="round" stroke-linecap="round" transform="rotate(-90 645.5 241.5)"/>
<path d="M693.3 284.9 L688.0 284.9 L688.0 274.9 L693.3 274.9M688.0 279.9 L692.0 279.9M700.6 276.6 L699.2 275.6 L696.6 275.6 L695.2 276.9 L695.2 278.4 L696.6 279.7 L699.2 280.1 L700.6 281.4 L700.6 282.9 L699.2 284.2 L696.6 284.2 L695.2 283.2M697.9 273.6 L697.9 286.2M707.8 274.9 L702.4 274.9 L702.4 279.1 L706.4 279.1 L707.8 280.6 L707.8 283.2 L706.4 284.9 L703.8 284.9 L702.4 283.2M709.7 274.9 L715.0 274.9 L711.7 284.9" stroke="#a4a4a4" stroke-width="1.15" fill="none" stroke-linejoin="round" stroke-linecap="round" transform="rotate(-90 687.5 285.5)"/>
<path d="M681.3 272.4 L674.5 272.4 L674.5 262.4 L681.3 262.4M674.5 267.4 L679.6 267.4M690.4 264.1 L688.7 263.1 L685.3 263.1 L683.6 264.4 L683.6 265.9 L685.3 267.2 L688.7 267.6 L690.4 268.9 L690.4 270.4 L688.7 271.7 L685.3 271.7 L683.6 270.7M687.0 261.1 L687.0 273.7M699.5 262.4 L692.7 262.4 L692.7 266.6 L697.8 266.6 L699.5 268.1 L699.5 270.7 L697.8 272.4 L694.4 272.4 L692.7 270.7" stroke="#a4a4a4" stroke-width="1.15" fill="none" stroke-linejoin="round" stroke-linecap="round" transform="rotate(-90 674 273)"/>
<path d="M513.8 293.1 L507.5 293.1 L507.5 283.1 L513.8 283.1M507.5 288.1 L512.2 288.1M522.4 284.8 L520.8 283.8 L517.6 283.8 L516.1 285.1 L516.1 286.6 L517.6 287.9 L520.8 288.3 L522.4 289.6 L522.4 291.1 L520.8 292.4 L517.6 292.4 L516.1 291.4M519.2 281.8 L519.2 294.4M530.9 283.1 L524.6 283.1 L524.6 287.3 L529.4 287.3 L530.9 288.8 L530.9 291.4 L529.4 293.1 L526.2 293.1 L524.6 291.4M534.8 287.9 L533.2 286.4 L533.2 284.8 L534.8 283.1 L537.9 283.1 L539.5 284.8 L539.5 286.4 L537.9 287.9 L534.8 287.9 L533.2 289.6 L533.2 291.4 L534.8 293.1 L537.9 293.1 L539.5 291.4 L539.5 289.6 L537.9 287.9" stroke="#a4a4a4" stroke-width="1.15" fill="none" stroke-linejoin="round" stroke-linecap="round"/>
<path d="M594.4 300.9 L588.5 300.9 L588.5 290.9 L594.4 290.9M588.5 295.9 L593.0 295.9M602.5 292.6 L601.0 291.6 L598.0 291.6 L596.5 292.9 L596.5 294.4 L598.0 295.7 L601.0 296.1 L602.5 297.4 L602.5 298.9 L601.0 300.2 L598.0 300.2 L596.5 299.2M599.5 289.6 L599.5 302.2M610.5 292.6 L609.0 290.9 L606.0 290.9 L604.5 292.6 L604.5 299.2 L606.0 300.9 L609.0 300.9 L610.5 299.2 L610.5 296.7 L609.0 295.2 L604.5 295.2M613.8 293.3 L616.1 290.9 L616.1 300.9" stroke="#a4a4a4" stroke-width="1.15" fill="none" stroke-linejoin="round" stroke-linecap="round" transform="rotate(-90 588 301.5)"/>
<path d="M567.2 308.4 L562.5 308.4 L562.5 298.4 L567.2 298.4M562.5 303.4 L566.1 303.4M573.7 300.1 L572.5 299.1 L570.1 299.1 L568.9 300.4 L568.9 301.9 L570.1 303.2 L572.5 303.6 L573.7 304.9 L573.7 306.4 L572.5 307.7 L570.1 307.7 L568.9 306.7M571.3 297.1 L571.3 309.7M580.1 300.1 L578.9 298.4 L576.5 298.4 L575.3 300.1 L575.3 306.7 L576.5 308.4 L578.9 308.4 L580.1 306.7 L580.1 304.2 L578.9 302.7 L575.3 302.7M581.8 300.1 L582.9 298.4 L585.3 298.4 L586.5 300.1 L586.5 301.8 L581.8 308.4 L586.5 308.4" stroke="#a4a4a4" stroke-width="1.15" fill="none" stroke-linejoin="round" stroke-linecap="round"/>
<path d="M545.7 328.4 L539.5 328.4 L539.5 318.4 L545.7 318.4M539.5 323.4 L544.2 323.4M554.2 320.1 L552.6 319.1 L549.5 319.1 L547.9 320.4 L547.9 321.9 L549.5 323.2 L552.6 323.6 L554.2 324.9 L554.2 326.4 L552.6 327.7 L549.5 327.7 L547.9 326.7M551.0 317.1 L551.0 329.7M562.6 318.4 L556.3 318.4 L556.3 322.6 L561.0 322.6 L562.6 324.1 L562.6 326.7 L561.0 328.4 L557.9 328.4 L556.3 326.7M564.8 326.7 L566.3 328.4 L569.4 328.4 L571.0 326.7 L571.0 320.1 L569.4 318.4 L566.3 318.4 L564.8 320.1 L564.8 322.6 L566.3 324.1 L571.0 324.1" stroke="#c8b0b0" stroke-width="1.15" fill="none" stroke-linejoin="round" stroke-linecap="round" transform="rotate(-90 539 329)"/>
<path d="M603.3 348.4 L597.0 348.4 L597.0 338.4 L603.3 338.4M597.0 343.4 L601.7 343.4M611.9 340.1 L610.3 339.1 L607.1 339.1 L605.6 340.4 L605.6 341.9 L607.1 343.2 L610.3 343.6 L611.9 344.9 L611.9 346.4 L610.3 347.7 L607.1 347.7 L605.6 346.7M608.7 337.1 L608.7 349.7M615.4 340.8 L617.9 338.4 L617.9 348.4M629.0 340.1 L627.4 338.4 L624.3 338.4 L622.7 340.1 L622.7 346.7 L624.3 348.4 L627.4 348.4 L629.0 346.7 L629.0 344.2 L627.4 342.7 L622.7 342.7" stroke="#a4a4a4" stroke-width="1.15" fill="none" stroke-linejoin="round" stroke-linecap="round"/>
<path d="M648.8 348.9 L642.5 348.9 L642.5 338.9 L648.8 338.9M642.5 343.9 L647.2 343.9M657.4 340.6 L655.8 339.6 L652.6 339.6 L651.1 340.9 L651.1 342.4 L652.6 343.7 L655.8 344.1 L657.4 345.4 L657.4 346.9 L655.8 348.2 L652.6 348.2 L651.1 347.2M654.2 337.6 L654.2 350.2M665.9 340.6 L664.4 338.9 L661.2 338.9 L659.6 340.6 L659.6 347.2 L661.2 348.9 L664.4 348.9 L665.9 347.2 L665.9 344.7 L664.4 343.2 L659.6 343.2M672.9 348.9 L672.9 338.9 L668.2 345.6 L674.5 345.6" stroke="#a4a4a4" stroke-width="1.15" fill="none" stroke-linejoin="round" stroke-linecap="round"/>
<path d="M671.3 348.9 L665.0 348.9 L665.0 338.9 L671.3 338.9M665.0 343.9 L669.7 343.9M679.9 340.6 L678.3 339.6 L675.1 339.6 L673.6 340.9 L673.6 342.4 L675.1 343.7 L678.3 344.1 L679.9 345.4 L679.9 346.9 L678.3 348.2 L675.1 348.2 L673.6 347.2M676.7 337.6 L676.7 350.2M683.4 341.3 L685.9 338.9 L685.9 348.9M697.0 338.9 L690.7 338.9 L690.7 343.1 L695.4 343.1 L697.0 344.6 L697.0 347.2 L695.4 348.9 L692.3 348.9 L690.7 347.2" stroke="#a4a4a4" stroke-width="1.15" fill="none" stroke-linejoin="round" stroke-linecap="round"/>
<path d="M625.9 382.4 L619.5 382.4 L619.5 372.4 L625.9 372.4M619.5 377.4 L624.3 377.4M634.6 374.1 L633.0 373.1 L629.8 373.1 L628.2 374.4 L628.2 375.9 L629.8 377.2 L633.0 377.6 L634.6 378.9 L634.6 380.4 L633.0 381.7 L629.8 381.7 L628.2 380.7M631.4 371.1 L631.4 383.7M636.9 372.4 L643.3 372.4 L639.3 382.4M647.2 382.4 L650.4 382.4 L652.0 380.7 L652.0 374.1 L650.4 372.4 L647.2 372.4 L645.6 374.1 L645.6 380.7 L647.2 382.4" stroke="#a4a4a4" stroke-width="1.15" fill="none" stroke-linejoin="round" stroke-linecap="round"/>
<path d="M442.0 427.4 L435.5 427.4 L435.5 417.4 L442.0 417.4M435.5 422.4 L440.4 422.4M450.7 419.1 L449.1 418.1 L445.9 418.1 L444.3 419.4 L444.3 420.9 L445.9 422.2 L449.1 422.6 L450.7 423.9 L450.7 425.4 L449.1 426.7 L445.9 426.7 L444.3 425.7M447.5 416.1 L447.5 428.7M457.9 427.4 L457.9 417.4 L453.0 424.1 L459.5 424.1" stroke="#a4a4a4" stroke-width="1.15" fill="none" stroke-linejoin="round" stroke-linecap="round"/>
<path d="M701.0 416.4 L694.5 416.4 L694.5 406.4 L701.0 406.4M694.5 411.4 L699.4 411.4M709.7 408.1 L708.1 407.1 L704.9 407.1 L703.3 408.4 L703.3 409.9 L704.9 411.2 L708.1 411.6 L709.7 412.9 L709.7 414.4 L708.1 415.7 L704.9 415.7 L703.3 414.7M706.5 405.1 L706.5 417.7M718.5 406.4 L712.0 406.4 L712.0 410.6 L716.9 410.6 L718.5 412.1 L718.5 414.7 L716.9 416.4 L713.6 416.4 L712.0 414.7" stroke="#a4a4a4" stroke-width="1.15" fill="none" stroke-linejoin="round" stroke-linecap="round"/>
<path d="M480.0 454.4 L473.5 454.4 L473.5 444.4 L480.0 444.4M473.5 449.4 L478.4 449.4M488.7 446.1 L487.1 445.1 L483.9 445.1 L482.3 446.4 L482.3 447.9 L483.9 449.2 L487.1 449.6 L488.7 450.9 L488.7 452.4 L487.1 453.7 L483.9 453.7 L482.3 452.7M485.5 443.1 L485.5 455.7M497.5 446.1 L495.9 444.4 L492.6 444.4 L491.0 446.1 L491.0 452.7 L492.6 454.4 L495.9 454.4 L497.5 452.7 L497.5 450.2 L495.9 448.7 L491.0 448.7" stroke="#a4a4a4" stroke-width="1.15" fill="none" stroke-linejoin="round" stroke-linecap="round"/>
<path d="M637.0 454.4 L630.5 454.4 L630.5 444.4 L637.0 444.4M630.5 449.4 L635.4 449.4M645.7 446.1 L644.1 445.1 L640.9 445.1 L639.3 446.4 L639.3 447.9 L640.9 449.2 L644.1 449.6 L645.7 450.9 L645.7 452.4 L644.1 453.7 L640.9 453.7 L639.3 452.7M642.5 443.1 L642.5 455.7M648.0 444.4 L654.5 444.4 L650.4 454.4" stroke="#a4a4a4" stroke-width="1.15" fill="none" stroke-linejoin="round" stroke-linecap="round"/>
<path d="M479.7 583.4 L473.5 583.4 L473.5 573.4 L479.7 573.4M473.5 578.4 L478.2 578.4M488.1 575.1 L486.6 574.1 L483.4 574.1 L481.9 575.4 L481.9 576.9 L483.4 578.2 L486.6 578.6 L488.1 579.9 L488.1 581.4 L486.6 582.7 L483.4 582.7 L481.9 581.7M485.0 572.1 L485.0 584.7M491.5 575.8 L494.0 573.4 L494.0 583.4" stroke="#a4a4a4" stroke-width="1.15" fill="none" stroke-linejoin="round" stroke-linecap="round" transform="rotate(-90 473 584)"/>
<path d="M637.5 583.4 L631.0 583.4 L631.0 573.4 L637.5 573.4M631.0 578.4 L635.9 578.4M646.2 575.1 L644.6 574.1 L641.4 574.1 L639.8 575.4 L639.8 576.9 L641.4 578.2 L644.6 578.6 L646.2 579.9 L646.2 581.4 L644.6 582.7 L641.4 582.7 L639.8 581.7M643.0 572.1 L643.0 584.7M648.5 575.1 L650.1 573.4 L653.4 573.4 L655.0 575.1 L655.0 576.8 L648.5 583.4 L655.0 583.4" stroke="#a4a4a4" stroke-width="1.15" fill="none" stroke-linejoin="round" stroke-linecap="round" transform="rotate(-90 630.5 584)"/>
<path d="M234.8 645.4 L228.5 645.4 L228.5 636.1 L234.8 636.1M228.5 640.7 L233.2 640.7M243.4 637.6 L241.8 636.7 L238.6 636.7 L237.1 638.0 L237.1 639.3 L238.6 640.6 L241.8 640.9 L243.4 642.1 L243.4 643.5 L241.8 644.8 L238.6 644.8 L237.1 643.8M240.2 634.8 L240.2 646.6M251.9 637.6 L250.4 636.1 L247.2 636.1 L245.6 637.6 L245.6 643.8 L247.2 645.4 L250.4 645.4 L251.9 643.8 L251.9 641.5 L250.4 640.1 L245.6 640.1M258.9 645.4 L258.9 636.1 L254.2 642.3 L260.5 642.3" stroke="#a4a4a4" stroke-width="1.15" fill="none" stroke-linejoin="round" stroke-linecap="round"/>
<path d="M258.5 644.4 L259.5 643.2 L261.5 643.2 L262.4 644.4 L262.4 645.5 L258.5 649.9 L262.4 649.9" stroke="#a0a0e0" stroke-width="1.15" fill="none" stroke-linejoin="round" stroke-linecap="round"/>
<path d="M280.2 645.4 L273.9 645.4 L273.9 636.1 L280.2 636.1M273.9 640.7 L278.6 640.7M288.8 637.6 L287.2 636.7 L284.0 636.7 L282.5 638.0 L282.5 639.3 L284.0 640.6 L287.2 640.9 L288.8 642.1 L288.8 643.5 L287.2 644.8 L284.0 644.8 L282.5 643.8M285.6 634.8 L285.6 646.6M297.3 637.6 L295.8 636.1 L292.6 636.1 L291.0 637.6 L291.0 643.8 L292.6 645.4 L295.8 645.4 L297.3 643.8 L297.3 641.5 L295.8 640.1 L291.0 640.1M299.6 637.6 L301.2 636.1 L304.3 636.1 L305.9 637.6 L305.9 639.2 L304.3 640.6 L301.9 640.6M304.3 640.6 L305.9 642.0 L305.9 643.8 L304.3 645.4 L301.2 645.4 L299.6 643.8" stroke="#a4a4a4" stroke-width="1.15" fill="none" stroke-linejoin="round" stroke-linecap="round"/>
<path d="M307.3 644.8 L308.9 643.2 L308.9 649.9" stroke="#a0a0e0" stroke-width="1.15" fill="none" stroke-linejoin="round" stroke-linecap="round"/>
<path d="M427.4 668.4 L421.5 668.4 L421.5 659.1 L427.4 659.1M421.5 663.7 L426.0 663.7M435.5 660.6 L434.0 659.7 L431.0 659.7 L429.5 661.0 L429.5 662.3 L431.0 663.6 L434.0 663.9 L435.5 665.1 L435.5 666.5 L434.0 667.8 L431.0 667.8 L429.5 666.8M432.5 657.8 L432.5 669.6M438.7 661.3 L441.1 659.1 L441.1 668.4M445.6 660.6 L447.0 659.1 L450.0 659.1 L451.5 660.6 L451.5 662.2 L445.6 668.4 L451.5 668.4" stroke="#a4a4a4" stroke-width="1.15" fill="none" stroke-linejoin="round" stroke-linecap="round"/>
<path d="M449.5 666.9 L450.5 665.8 L452.5 665.8 L453.4 666.9 L453.4 668.0 L449.5 672.4 L453.4 672.4" stroke="#a0a0e0" stroke-width="1.15" fill="none" stroke-linejoin="round" stroke-linecap="round"/>
<path d="M472.4 668.4 L466.5 668.4 L466.5 659.1 L472.4 659.1M466.5 663.7 L471.0 663.7M480.5 660.6 L479.0 659.7 L476.0 659.7 L474.5 661.0 L474.5 662.3 L476.0 663.6 L479.0 663.9 L480.5 665.1 L480.5 666.5 L479.0 667.8 L476.0 667.8 L474.5 666.8M477.5 657.8 L477.5 669.6M483.7 661.3 L486.1 659.1 L486.1 668.4M491.8 661.3 L494.1 659.1 L494.1 668.4" stroke="#a4a4a4" stroke-width="1.15" fill="none" stroke-linejoin="round" stroke-linecap="round"/>
<path d="M495.3 667.3 L496.9 665.8 L496.9 672.4" stroke="#a0a0e0" stroke-width="1.15" fill="none" stroke-linejoin="round" stroke-linecap="round"/>
<path d="M515.0 668.4 L508.5 668.4 L508.5 658.4 L515.0 658.4M508.5 663.4 L513.4 663.4M523.9 660.1 L522.2 659.1 L519.0 659.1 L517.3 660.4 L517.3 661.9 L519.0 663.2 L522.2 663.6 L523.9 664.9 L523.9 666.4 L522.2 667.7 L519.0 667.7 L517.3 666.7M520.6 657.1 L520.6 669.7M527.5 660.8 L530.1 658.4 L530.1 668.4M536.6 668.4 L539.9 668.4 L541.5 666.7 L541.5 660.1 L539.9 658.4 L536.6 658.4 L535.0 660.1 L535.0 666.7 L536.6 668.4" stroke="#a4a4a4" stroke-width="1.15" fill="none" stroke-linejoin="round" stroke-linecap="round"/>
<path d="M584.7 668.4 L578.5 668.4 L578.5 659.1 L584.7 659.1M578.5 663.7 L583.2 663.7M593.1 660.6 L591.6 659.7 L588.4 659.7 L586.9 661.0 L586.9 662.3 L588.4 663.6 L591.6 663.9 L593.1 665.1 L593.1 666.5 L591.6 667.8 L588.4 667.8 L586.9 666.8M590.0 657.8 L590.0 669.6M595.3 660.6 L596.8 659.1 L599.9 659.1 L601.5 660.6 L601.5 662.2 L599.9 663.6 L597.6 663.6M599.9 663.6 L601.5 665.0 L601.5 666.8 L599.9 668.4 L596.8 668.4 L595.3 666.8" stroke="#a4a4a4" stroke-width="1.15" fill="none" stroke-linejoin="round" stroke-linecap="round"/>
<path d="M608.5 666.9 L609.5 665.8 L611.5 665.8 L612.4 666.9 L612.4 668.0 L608.5 672.4 L612.4 672.4" stroke="#a0a0e0" stroke-width="1.15" fill="none" stroke-linejoin="round" stroke-linecap="round"/>
<path d="M629.7 668.4 L623.5 668.4 L623.5 659.1 L629.7 659.1M623.5 663.7 L628.2 663.7M638.1 660.6 L636.6 659.7 L633.4 659.7 L631.9 661.0 L631.9 662.3 L633.4 663.6 L636.6 663.9 L638.1 665.1 L638.1 666.5 L636.6 667.8 L633.4 667.8 L631.9 666.8M635.0 657.8 L635.0 669.6M641.8 663.6 L640.3 662.2 L640.3 660.6 L641.8 659.1 L644.9 659.1 L646.5 660.6 L646.5 662.2 L644.9 663.6 L641.8 663.6 L640.3 665.1 L640.3 666.8 L641.8 668.4 L644.9 668.4 L646.5 666.8 L646.5 665.1 L644.9 663.6" stroke="#a4a4a4" stroke-width="1.15" fill="none" stroke-linejoin="round" stroke-linecap="round"/>
<path d="M653.3 667.3 L654.9 665.8 L654.9 672.4" stroke="#a0a0e0" stroke-width="1.15" fill="none" stroke-linejoin="round" stroke-linecap="round"/>
<path d="M682.0 668.1 L675.5 668.1 L675.5 658.1 L682.0 658.1M675.5 663.1 L680.4 663.1M690.7 659.8 L689.1 658.8 L685.9 658.8 L684.3 660.1 L684.3 661.6 L685.9 662.9 L689.1 663.3 L690.7 664.6 L690.7 666.1 L689.1 667.4 L685.9 667.4 L684.3 666.4M687.5 656.8 L687.5 669.4M693.0 666.4 L694.6 668.1 L697.9 668.1 L699.5 666.4 L699.5 659.8 L697.9 658.1 L694.6 658.1 L693.0 659.8 L693.0 662.3 L694.6 663.8 L699.5 663.8" stroke="#a4a4a4" stroke-width="1.15" fill="none" stroke-linejoin="round" stroke-linecap="round"/>
<path d="M704.6 663.7 L698.5 663.7 L698.5 653.7 L704.6 653.7M698.5 658.7 L703.1 658.7M712.9 655.4 L711.4 654.4 L708.3 654.4 L706.8 655.7 L706.8 657.2 L708.3 658.5 L711.4 658.9 L712.9 660.2 L712.9 661.7 L711.4 663.0 L708.3 663.0 L706.8 662.0M709.9 652.4 L709.9 665.0M715.1 655.4 L716.6 653.7 L719.7 653.7 L721.2 655.4 L721.2 657.0 L715.1 663.7 L721.2 663.7M724.6 656.1 L727.0 653.7 L727.0 663.7" stroke="#a4a4a4" stroke-width="1.15" fill="none" stroke-linejoin="round" stroke-linecap="round"/>
<path d="M413.0 151.3 L414.1 150.1 L416.2 150.1 L417.3 151.3 L417.3 152.5 L416.2 153.6 L414.6 153.6M416.2 153.6 L417.3 154.7 L417.3 156.2 L416.2 157.4 L414.1 157.4 L413.0 156.2" stroke="#90e098" stroke-width="1.15" fill="none" stroke-linejoin="round" stroke-linecap="round" transform="rotate(-90 412.5 158)"/>
<path d="M453.9 151.8 L455.6 150.1 L455.6 157.4" stroke="#90e098" stroke-width="1.15" fill="none" stroke-linejoin="round" stroke-linecap="round" transform="rotate(-90 452.5 158)"/>
<path d="M416.7 230.4 L416.7 223.1 L413.5 228.0 L417.8 228.0" stroke="#90e098" stroke-width="1.15" fill="none" stroke-linejoin="round" stroke-linecap="round" transform="rotate(-90 413 231)"/>
<path d="M453.5 224.3 L454.6 223.1 L456.7 223.1 L457.8 224.3 L457.8 225.5 L453.5 230.4 L457.8 230.4" stroke="#90e098" stroke-width="1.15" fill="none" stroke-linejoin="round" stroke-linecap="round" transform="rotate(-90 453 231)"/>
<path d="M416.7 366.4 L416.7 359.1 L413.5 364.0 L417.8 364.0" stroke="#90e098" stroke-width="1.15" fill="none" stroke-linejoin="round" stroke-linecap="round" transform="rotate(-90 413 367)"/>
<path d="M453.5 360.3 L454.6 359.1 L456.7 359.1 L457.8 360.3 L457.8 361.5 L453.5 366.4 L457.8 366.4" stroke="#90e098" stroke-width="1.15" fill="none" stroke-linejoin="round" stroke-linecap="round" transform="rotate(-90 453 367)"/>
<path d="M413.0 287.3 L414.1 286.1 L416.2 286.1 L417.3 287.3 L417.3 288.5 L416.2 289.6 L414.6 289.6M416.2 289.6 L417.3 290.7 L417.3 292.2 L416.2 293.4 L414.1 293.4 L413.0 292.2" stroke="#90e098" stroke-width="1.15" fill="none" stroke-linejoin="round" stroke-linecap="round" transform="rotate(-90 412.5 294)"/>
<path d="M453.9 287.8 L455.6 286.1 L455.6 293.4" stroke="#90e098" stroke-width="1.15" fill="none" stroke-linejoin="round" stroke-linecap="round" transform="rotate(-90 452.5 294)"/>
</svg></div>

</body></html>
